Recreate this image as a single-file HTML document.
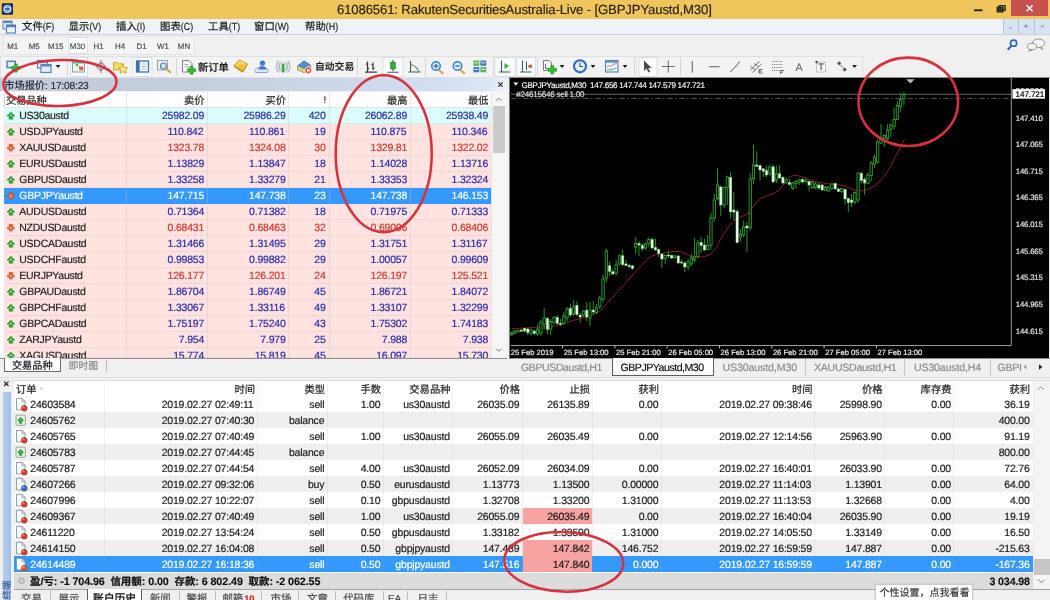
<!DOCTYPE html>
<html lang="zh-CN">
<head>
<meta charset="utf-8">
<title>61086561: RakutenSecuritiesAustralia-Live - [GBPJPYaustd,M30]</title>
<style>
html,body{margin:0;padding:0;background:#f0f0f0;overflow:hidden}
#app{position:relative;width:1050px;height:600px;overflow:hidden;font-family:"Liberation Sans", "Noto Sans CJK SC", sans-serif;background:#f0f0f0}
#app>div{position:absolute}
#ov{position:absolute;left:0;top:0;width:1050px;height:600px;font-family:"Liberation Sans", "Noto Sans CJK SC", sans-serif;pointer-events:none;will-change:transform;text-rendering:geometricPrecision}
#ov text{font-family:"Liberation Sans", "Noto Sans CJK SC", sans-serif;white-space:pre}
</style>
</head>
<body>
<div id="app">
<div style="left:0px;top:0px;width:1050px;height:18.6px;background:#f0c55c;"></div>
<div style="left:1011px;top:0px;width:37px;height:16px;background:#c9514d;"></div>
<div style="left:0px;top:18.6px;width:1050px;height:16.4px;background:#eff2f7;"></div>
<div style="left:0px;top:34px;width:1050px;height:1px;background:#cdd0d6;"></div>
<div style="left:1003px;top:18.6px;width:47px;height:15.4px;background:#d6e3f3;border-left:1px solid #b4c3d6;"></div>
<div style="left:1018px;top:18.6px;width:1px;height:15.4px;background:#b4c3d6;"></div>
<div style="left:1034px;top:18.6px;width:1px;height:15.4px;background:#b4c3d6;"></div>
<div style="left:0px;top:35px;width:1050px;height:21px;background:#f0f0f0;"></div>
<div style="left:3px;top:36px;width:192px;height:19px;background:#f4f4f5;border:1px solid #e4e5e8;box-sizing:border-box;"></div>
<div style="left:68px;top:37px;width:20px;height:17px;background:#fcfdff;border:1px solid #dbe2ec;box-sizing:border-box;"></div>
<div style="left:0px;top:56px;width:1050px;height:22px;background:#f0f0f0;"></div>
<div style="left:0px;top:56px;width:863px;height:22px;background:#f3f3f4;border:1px solid #e0e1e4;box-sizing:border-box;"></div>
<div style="left:67px;top:58px;width:1px;height:18px;background:#d3d6db;"></div>
<div style="left:176px;top:58px;width:1px;height:18px;background:#d3d6db;"></div>
<div style="left:357px;top:58px;width:1px;height:18px;background:#d3d6db;"></div>
<div style="left:425px;top:58px;width:1px;height:18px;background:#d3d6db;"></div>
<div style="left:493px;top:58px;width:1px;height:18px;background:#d3d6db;"></div>
<div style="left:537px;top:58px;width:1px;height:18px;background:#d3d6db;"></div>
<div style="left:634px;top:58px;width:1px;height:18px;background:#d3d6db;"></div>
<div style="left:680px;top:58px;width:1px;height:18px;background:#d3d6db;"></div>
<div style="left:636px;top:58px;width:1px;height:18px;background:#e6e8ec;"></div>
<div style="left:0px;top:78px;width:510px;height:300px;background:#f0f0f0;"></div>
<div style="left:0px;top:78px;width:508.5px;height:13.3px;background:linear-gradient(90deg,#c2cad9 0%,#c5cede 40%,#d3dff2 88%,#dbe6f6 96%,#f1f4f9 100%);"></div>
<div style="left:0px;top:92px;width:507px;height:266px;background:#ffffff;"></div>
<div style="left:3.5px;top:92px;width:1px;height:266px;background:#c9d3e3;"></div>
<div style="left:4px;top:107px;width:487px;height:1px;background:#e4e4e4;"></div>
<div style="left:4px;top:108px;width:487px;height:16px;background:#dbfcfb;border-bottom:1px solid #cdeeee;box-sizing:border-box;"></div>
<div style="left:4px;top:124px;width:487px;height:16px;background:#ffe3e1;border-bottom:1px solid #f7d6d4;box-sizing:border-box;"></div>
<div style="left:4px;top:140px;width:487px;height:16px;background:#ffe3e1;border-bottom:1px solid #f7d6d4;box-sizing:border-box;"></div>
<div style="left:4px;top:156px;width:487px;height:16px;background:#ffe3e1;border-bottom:1px solid #f7d6d4;box-sizing:border-box;"></div>
<div style="left:4px;top:172px;width:487px;height:16px;background:#ffe3e1;border-bottom:1px solid #f7d6d4;box-sizing:border-box;"></div>
<div style="left:4px;top:188px;width:487px;height:16px;background:#3399fe;border-bottom:1px solid #3399fe;box-sizing:border-box;"></div>
<div style="left:4px;top:204px;width:487px;height:16px;background:#ffe3e1;border-bottom:1px solid #f7d6d4;box-sizing:border-box;"></div>
<div style="left:4px;top:220px;width:487px;height:16px;background:#ffe3e1;border-bottom:1px solid #f7d6d4;box-sizing:border-box;"></div>
<div style="left:4px;top:236px;width:487px;height:16px;background:#ffe3e1;border-bottom:1px solid #f7d6d4;box-sizing:border-box;"></div>
<div style="left:4px;top:252px;width:487px;height:16px;background:#ffe3e1;border-bottom:1px solid #f7d6d4;box-sizing:border-box;"></div>
<div style="left:4px;top:268px;width:487px;height:16px;background:#ffe3e1;border-bottom:1px solid #f7d6d4;box-sizing:border-box;"></div>
<div style="left:4px;top:284px;width:487px;height:16px;background:#ffe3e1;border-bottom:1px solid #f7d6d4;box-sizing:border-box;"></div>
<div style="left:4px;top:300px;width:487px;height:16px;background:#ffe3e1;border-bottom:1px solid #f7d6d4;box-sizing:border-box;"></div>
<div style="left:4px;top:316px;width:487px;height:16px;background:#ffe3e1;border-bottom:1px solid #f7d6d4;box-sizing:border-box;"></div>
<div style="left:4px;top:332px;width:487px;height:16px;background:#ffe3e1;border-bottom:1px solid #f7d6d4;box-sizing:border-box;"></div>
<div style="left:4px;top:348px;width:487px;height:10px;background:#ffe3e1;border-bottom:1px solid #f7d6d4;box-sizing:border-box;"></div>
<div style="left:125.5px;top:92px;width:1px;height:266px;background:rgba(205,190,195,0.35);"></div>
<div style="left:206.5px;top:92px;width:1px;height:266px;background:rgba(205,190,195,0.35);"></div>
<div style="left:287.5px;top:92px;width:1px;height:266px;background:rgba(205,190,195,0.35);"></div>
<div style="left:328.5px;top:92px;width:1px;height:266px;background:rgba(205,190,195,0.35);"></div>
<div style="left:410px;top:92px;width:1px;height:266px;background:rgba(205,190,195,0.35);"></div>
<div style="left:491px;top:91.5px;width:17px;height:266.5px;background:#f6f6f6;border-left:1px solid #e6e6e6;box-sizing:border-box;"></div>
<div style="left:492.5px;top:105.5px;width:12.5px;height:47.5px;background:#cbcbcb;"></div>
<div style="left:0px;top:358px;width:510px;height:18px;background:#f0f0f0;"></div>
<div style="left:0px;top:358px;width:507px;height:1px;background:#8e8e8e;"></div>
<div style="left:3.7px;top:358px;width:57px;height:13.7px;background:#ffffff;border:1px solid #6d6d6d;border-top:none;box-sizing:border-box;"></div>
<div style="left:106px;top:359.5px;width:1px;height:11.5px;background:#b9b9b9;"></div>
<div style="left:507px;top:78px;width:3px;height:300px;background:#f0f0f0;"></div>
<div style="left:509px;top:77px;width:541px;height:1px;background:#8a8a8a;"></div>
<div style="left:509px;top:78px;width:541px;height:280px;background:#000000;"></div>
<div style="left:509.3px;top:78px;width:1px;height:280px;background:#7d7d7d;"></div>
<div style="left:1049px;top:78px;width:1px;height:280px;background:#e9e9e9;"></div>
<div style="left:509px;top:358px;width:541px;height:18px;background:#f0f0f0;"></div>
<div style="left:509px;top:358px;width:541px;height:1px;background:#8e8e8e;"></div>
<div style="left:612px;top:358px;width:101.5px;height:17.6px;background:#ffffff;border:1px solid #5c5c5c;border-top:none;box-sizing:border-box;"></div>
<div style="left:1019px;top:359px;width:31px;height:16px;background:#f0f0f0;"></div>
<div style="left:805px;top:359px;width:1px;height:16.5px;background:#c6c6c6;"></div>
<div style="left:904px;top:359px;width:1px;height:16.5px;background:#c6c6c6;"></div>
<div style="left:990px;top:359px;width:1px;height:16.5px;background:#c6c6c6;"></div>
<div style="left:0px;top:376px;width:1050px;height:4px;background:#f2f2f2;"></div>
<div style="left:0px;top:377px;width:1050px;height:1px;background:#dedede;"></div>
<div style="left:0px;top:380px;width:1050px;height:220px;background:#f0f0f0;"></div>
<div style="left:13.5px;top:380px;width:1036.5px;height:192.5px;background:#ffffff;"></div>
<div style="left:0px;top:379.5px;width:1050px;height:1px;background:#dcdcdc;"></div>
<div style="left:2.6px;top:392px;width:8.6px;height:208px;background:linear-gradient(90deg,#b7cdec,#a3bee4);"></div>
<div style="left:13.5px;top:396px;width:1019px;height:1px;background:#e6e6e6;"></div>
<div style="left:13.5px;top:396.2px;width:1019px;height:16px;background:#ffffff;"></div>
<div style="left:13.5px;top:412.2px;width:1019px;height:16px;background:#efefef;"></div>
<div style="left:13.5px;top:428.2px;width:1019px;height:16px;background:#ffffff;"></div>
<div style="left:13.5px;top:444.2px;width:1019px;height:16px;background:#efefef;"></div>
<div style="left:13.5px;top:460.2px;width:1019px;height:16px;background:#ffffff;"></div>
<div style="left:13.5px;top:476.2px;width:1019px;height:16px;background:#efefef;"></div>
<div style="left:13.5px;top:492.2px;width:1019px;height:16px;background:#ffffff;"></div>
<div style="left:13.5px;top:508.2px;width:1019px;height:16px;background:#efefef;"></div>
<div style="left:523px;top:508.2px;width:69px;height:16px;background:#f6a3a2;"></div>
<div style="left:13.5px;top:524.2px;width:1019px;height:16px;background:#ffffff;"></div>
<div style="left:13.5px;top:540.2px;width:1019px;height:16px;background:#efefef;"></div>
<div style="left:523px;top:540.2px;width:69px;height:16px;background:#f6a3a2;"></div>
<div style="left:13.5px;top:556.2px;width:1019px;height:16px;background:#3399fe;"></div>
<div style="left:523px;top:556.2px;width:69px;height:16px;background:#f6a3a2;"></div>
<div style="left:103.5px;top:380.5px;width:1px;height:192px;background:rgba(170,170,170,0.15);"></div>
<div style="left:256.7px;top:380.5px;width:1px;height:192px;background:rgba(170,170,170,0.15);"></div>
<div style="left:326.7px;top:380.5px;width:1px;height:192px;background:rgba(170,170,170,0.15);"></div>
<div style="left:382.7px;top:380.5px;width:1px;height:192px;background:rgba(170,170,170,0.15);"></div>
<div style="left:452.2px;top:380.5px;width:1px;height:192px;background:rgba(170,170,170,0.15);"></div>
<div style="left:521.7px;top:380.5px;width:1px;height:192px;background:rgba(170,170,170,0.15);"></div>
<div style="left:591.7px;top:380.5px;width:1px;height:192px;background:rgba(170,170,170,0.15);"></div>
<div style="left:660.7px;top:380.5px;width:1px;height:192px;background:rgba(170,170,170,0.15);"></div>
<div style="left:814.2px;top:380.5px;width:1px;height:192px;background:rgba(170,170,170,0.15);"></div>
<div style="left:884.2px;top:380.5px;width:1px;height:192px;background:rgba(170,170,170,0.15);"></div>
<div style="left:953.4px;top:380.5px;width:1px;height:192px;background:rgba(170,170,170,0.15);"></div>
<div style="left:13.5px;top:572.5px;width:1019px;height:16.5px;background:#dcdcdc;"></div>
<div style="left:1032.5px;top:380.5px;width:17.5px;height:208.5px;background:#f4f4f4;border-left:1px solid #ebebeb;box-sizing:border-box;"></div>
<div style="left:1034px;top:558.5px;width:16px;height:16px;background:#c6c6c6;"></div>
<div style="left:13.5px;top:588.8px;width:1036.5px;height:1px;background:#a3a3a3;"></div>
<div style="left:86.5px;top:589px;width:55.5px;height:12px;background:#ffffff;border:1px solid #5c5c5c;border-top:none;box-sizing:border-box;"></div>
<div style="left:50px;top:591px;width:1px;height:9px;background:#bdbdbd;"></div>
<div style="left:178.6px;top:591px;width:1px;height:9px;background:#bdbdbd;"></div>
<div style="left:214.8px;top:591px;width:1px;height:9px;background:#bdbdbd;"></div>
<div style="left:261.2px;top:591px;width:1px;height:9px;background:#bdbdbd;"></div>
<div style="left:298.4px;top:591px;width:1px;height:9px;background:#bdbdbd;"></div>
<div style="left:334.7px;top:591px;width:1px;height:9px;background:#bdbdbd;"></div>
<div style="left:382.6px;top:591px;width:1px;height:9px;background:#bdbdbd;"></div>
<div style="left:406.9px;top:591px;width:1px;height:9px;background:#bdbdbd;"></div>
<div style="left:445.7px;top:591px;width:1px;height:9px;background:#bdbdbd;"></div>
<div style="left:874.5px;top:583.5px;width:98px;height:17px;background:#ffffff;border:1px solid #c9c9c9;box-sizing:border-box;box-shadow:0 0 2px rgba(0,0,0,0.15);"></div>
<svg id="ov" width="1050" height="600" viewBox="0 0 1050 600">
<g><rect x="1.8" y="3.2" width="11.2" height="11.6" rx="0.8" fill="#152c66"/><circle cx="7.4" cy="9" r="4.1" fill="#dfe8fb"/><circle cx="7.4" cy="9" r="2.9" fill="#2f62cf"/><path d="M4.6 8.3c1.500-1.500 4-1.500 5.600 0M4.600 9.900c1.500 1.400 4 1.400 5.600 0" stroke="#e8effd" stroke-width="1" fill="none"/></g>
<text x="337.00" y="13.84" font-size="13.2" letter-spacing="-0.163" fill="#2a2416" stroke="#2a2416" stroke-width="0.18">61086561: RakutenSecuritiesAustralia-Live - [GBPJPYaustd,M30]</text>
<rect x="974" y="9.4" width="8.5" height="1.8" fill="#1c1a12"/>
<g fill="none" stroke="#2a261a" stroke-width="1.4"><rect x="997.3" y="7.2" width="5.6" height="4.6" fill="#3a3424"/><path d="M999.3 7.2V5.6h5.8v4.6h-2.2"/></g>
<path d="M1026.6 5.2l6 6M1032.6 5.2l-6 6" stroke="#fff" stroke-width="1.6" fill="none"/>
<g fill="#7f93ad"><path d="M1009.2 27.3h2.6l-1.3 1.6z"/><rect x="1024.6" y="24.8" width="2.6" height="2.6"/><path d="M1041 25.2l2.4 2.4M1043.4 25.2l-2.4 2.4" stroke="#7f93ad" stroke-width="1" /></g>
<g><rect x="3" y="21" width="9" height="8" fill="#dfe9f8" stroke="#5b86c4" stroke-width="1"/><rect x="6.5" y="25" width="9" height="8" fill="#eaf1fb" stroke="#4d7cbd" stroke-width="1"/><rect x="6.5" y="25" width="9" height="2.2" fill="#4d7cbd"/><rect x="3" y="21" width="9" height="2" fill="#5b86c4"/></g>
<g fill="#1a1a1a"><text x="22.00" y="30.25" font-size="10.4" stroke="#1a1a1a" stroke-width="0.2">文件</text><text x="42.80" y="29.84" font-size="10.30" textLength="11.31" lengthAdjust="spacingAndGlyphs" stroke="#1a1a1a" stroke-width="0.15">(F)</text></g>
<g fill="#1a1a1a"><text x="68.60" y="30.25" font-size="10.4" stroke="#1a1a1a" stroke-width="0.2">显示</text><text x="89.40" y="29.84" font-size="10.30" textLength="11.81" lengthAdjust="spacingAndGlyphs" stroke="#1a1a1a" stroke-width="0.15">(V)</text></g>
<g fill="#1a1a1a"><text x="116.00" y="30.25" font-size="10.4" stroke="#1a1a1a" stroke-width="0.2">插入</text><text x="136.80" y="29.84" font-size="10.30" textLength="8.36" lengthAdjust="spacingAndGlyphs" stroke="#1a1a1a" stroke-width="0.15">(I)</text></g>
<g fill="#1a1a1a"><text x="160.00" y="30.25" font-size="10.4" stroke="#1a1a1a" stroke-width="0.2">图表</text><text x="180.80" y="29.84" font-size="10.30" textLength="12.30" lengthAdjust="spacingAndGlyphs" stroke="#1a1a1a" stroke-width="0.15">(C)</text></g>
<g fill="#1a1a1a"><text x="208.00" y="30.25" font-size="10.4" stroke="#1a1a1a" stroke-width="0.2">工具</text><text x="228.80" y="29.84" font-size="10.30" textLength="11.31" lengthAdjust="spacingAndGlyphs" stroke="#1a1a1a" stroke-width="0.15">(T)</text></g>
<g fill="#1a1a1a"><text x="254.00" y="30.25" font-size="10.4" stroke="#1a1a1a" stroke-width="0.2">窗口</text><text x="274.80" y="29.84" font-size="10.30" textLength="14.26" lengthAdjust="spacingAndGlyphs" stroke="#1a1a1a" stroke-width="0.15">(W)</text></g>
<g fill="#1a1a1a"><text x="305.00" y="30.25" font-size="10.4" stroke="#1a1a1a" stroke-width="0.2">帮助</text><text x="325.80" y="29.84" font-size="10.30" textLength="12.30" lengthAdjust="spacingAndGlyphs" stroke="#1a1a1a" stroke-width="0.15">(H)</text></g>
<text x="7.21" y="48.52" font-size="7.9" letter-spacing="0.000" fill="#4c4c4c" stroke="#4c4c4c" stroke-width="0.18">M1</text>
<text x="28.81" y="48.52" font-size="7.9" letter-spacing="0.000" fill="#4c4c4c" stroke="#4c4c4c" stroke-width="0.18">M5</text>
<text x="48.12" y="48.52" font-size="7.9" letter-spacing="0.000" fill="#4c4c4c" stroke="#4c4c4c" stroke-width="0.18">M15</text>
<text x="69.82" y="48.52" font-size="7.9" letter-spacing="0.000" fill="#4c4c4c" stroke="#4c4c4c" stroke-width="0.18">M30</text>
<text x="93.45" y="48.52" font-size="7.9" letter-spacing="0.000" fill="#4c4c4c" stroke="#4c4c4c" stroke-width="0.18">H1</text>
<text x="114.95" y="48.52" font-size="7.9" letter-spacing="0.000" fill="#4c4c4c" stroke="#4c4c4c" stroke-width="0.18">H4</text>
<text x="136.45" y="48.52" font-size="7.9" letter-spacing="0.000" fill="#4c4c4c" stroke="#4c4c4c" stroke-width="0.18">D1</text>
<text x="157.07" y="48.52" font-size="7.9" letter-spacing="0.000" fill="#4c4c4c" stroke="#4c4c4c" stroke-width="0.18">W1</text>
<text x="177.86" y="48.52" font-size="7.9" letter-spacing="0.000" fill="#4c4c4c" stroke="#4c4c4c" stroke-width="0.18">MN</text>
<g fill="none"><circle cx="1013.6" cy="43.2" r="3.1" stroke="#2d63c7" stroke-width="1.6" fill="#e8f0ff"/><path d="M1011.3 45.8l-3.6 4" stroke="#2d63c7" stroke-width="2"/></g>
<g fill="#f4f4f4" stroke="#8c8c8c" stroke-width="0.9"><ellipse cx="1038.5" cy="43.3" rx="6.2" ry="4.3"/><path d="M1041.5 47l1.2 2.6-3.4-2.2z"/><ellipse cx="1032" cy="46.6" rx="4.6" ry="3.3"/><path d="M1030 49.4l-1 2.2 3-1.9z"/></g>
<rect x="70.5" y="57.5" width="17" height="19" fill="#fafbfd" stroke="#d9dfe9" stroke-width="1"/>
<rect x="133" y="57.5" width="19" height="19" fill="#fafbfd" stroke="#d9dfe9" stroke-width="1"/>
<rect x="383" y="57.5" width="20" height="19" fill="#fafbfd" stroke="#d9dfe9" stroke-width="1"/>
<rect x="495" y="57.5" width="20" height="19" fill="#fafbfd" stroke="#d9dfe9" stroke-width="1"/>
<rect x="516.5" y="57.5" width="19" height="19" fill="#fafbfd" stroke="#d9dfe9" stroke-width="1"/>
<rect x="639" y="57.5" width="18" height="19" fill="#fafbfd" stroke="#d9dfe9" stroke-width="1"/>
<rect x="7" y="61.300" width="8.300" height="6.300" fill="#e6eefa" stroke="#4f7dbd" stroke-width="1.400"/>
<path d="M11.700000000000001 66.5h2.5999999999999996v-2.5999999999999996h3.0v2.5999999999999996h2.5999999999999996v3.0h-2.5999999999999996v2.5999999999999996h-3.0v-2.5999999999999996h-2.5999999999999996z" fill="#26c726" stroke="#1c8f1c" stroke-width="0.6"/>
<g fill="#e4edfa" stroke="#5a82bd" stroke-width="1.2"><rect x="37.5" y="60.5" width="10" height="7.5"/><rect x="41" y="64.5" width="10" height="8"/></g><rect x="37.5" y="60.5" width="10" height="2" fill="#5a82bd"/><rect x="41" y="64.5" width="10" height="2" fill="#5a82bd"/>
<path d="M55.6 65.1h4.8l-2.4 2.8z" fill="#1a1a1a"/>
<rect x="72.5" y="61.5" width="12" height="10.5" fill="#eef4ee" stroke="#7fa6a0" stroke-width="1"/><rect x="72.5" y="61.5" width="12" height="2" fill="#6fae9a"/><path d="M75 65l3 -1.5v3z" fill="#3aa83a"/><path d="M79 66.5l3.5 3M82.5 66.5v3h-3" stroke="#d8443c" stroke-width="1.3" fill="none"/><circle cx="80.8" cy="68.2" r="1.6" fill="#e0605a"/>
<g fill="none" stroke="#8a8f96" stroke-width="1.2"><path d="M101 60v13M96.5 66.5l4.5-4.5 4.5 4.5-4.5 4.5z"/></g>
<g stroke="#c9a227" stroke-width="0.9"><path d="M113.5 62.5h4l1 1.3h5v6.2h-10z" fill="#f6dc6a"/><path d="M123 64.5l1.5 2.9 3.2.4-2.3 2.2.6 3.2-3-1.6-2.9 1.6.6-3.2-2.3-2.2 3.2-.4z" fill="#fbe88a"/></g>
<rect x="136.5" y="61" width="12" height="11" fill="#f4f8fd" stroke="#3f6fb3" stroke-width="1.3"/><rect x="136.5" y="61" width="3.2" height="11" fill="#3f6fb3"/><path d="M141.5 64h5M141.5 66.5h5M141.5 69h5" stroke="#9db6d6" stroke-width="0.8"/>
<rect x="157.5" y="60.5" width="10" height="9.5" fill="#eef0f3" stroke="#9aa1ab" stroke-width="1"/><circle cx="163.5" cy="66" r="3" fill="#cfe0f5" stroke="#5d7fae" stroke-width="1.1"/><path d="M165.8 68.4l5 4.4" stroke="#c8a53a" stroke-width="1.8"/>
<path d="M182.5 60.5h6.5l3 3v8.500h-9.500z" fill="#fafafa" stroke="#7d7d7d" stroke-width="1"/><path d="M184.500 64.500h4M184.500 66.800h5.500" stroke="#9a9a9a" stroke-width="0.8"/>
<path d="M187.6 68.8h2.6v-2.6h2.8v2.6h2.6v2.8h-2.6v2.6h-2.8v-2.6h-2.6z" fill="#2fbe2f" stroke="#1c8f1c" stroke-width="0.6"/>
<path d="M233.800 66.800l5.800-6.300 8 4.600-4.800 7.600z" fill="#b8860f"/><path d="M233.800 65.600l5.800-5.800 8 4.300-4.800 7z" fill="#f0c23c" stroke="#c9971c" stroke-width="0.7"/><path d="M236.800 65.300l3.600-3.400 4.600 2.500" stroke="#fbe9a6" stroke-width="1.1" fill="none"/>
<path d="M255.5 72.5c-1.5-3 1-5 3-4.5.5-2.5 5.5-2.5 6 0 3-.5 4.500 2.500 3 4.500z" fill="#dce8f8" stroke="#7a9ccc" stroke-width="0.9"/><circle cx="262.5" cy="63" r="2.6" fill="#3d78c9"/><path d="M258.500 69.500c0-4.500 8-4.500 8 0z" fill="#3d78c9"/>
<circle cx="283.100" cy="66.700" r="6.300" fill="#dfe2e6" opacity="0.75"/><g fill="none" stroke="#a3a9b1" stroke-width="1.1"><path d="M280.500 63c-2 2.200-2 5.300 0 7.500M285.700 63c2 2.200 2 5.300 0 7.500M278.600 61c-3.300 3.500-3.300 8 0 11.500M287.600 61c3.300 3.500 3.300 8 0 11.500"/></g><rect x="281.700" y="63.500" width="2.800" height="9" rx="1.200" fill="#3fae4a"/>
<path d="M297.500 66l6.500-5 6.500 4v4l-6.500 3.500-6.500-3z" fill="#4f8fd6" stroke="#2f65a8" stroke-width="0.8"/><path d="M297.500 66l6.500 3 6.500-4v4l-6.500 3.500-6.500-3z" fill="#f0cf52"/><circle cx="308.300" cy="70.300" r="3.200" fill="#e23b2e" stroke="#fff" stroke-width="0.6"/><rect x="307" y="69" width="2.600" height="2.600" fill="#fff"/>
<g stroke="#34433c" stroke-width="1.250" fill="none"><path d="M365 72h12M367.500 61.500v10.500M366 64h1.500M367.500 68.500h1.500M373 62.500v7.500M371.500 64.500h1.500M373 68h1.500"/></g>
<g stroke="#3d5c4f" stroke-width="1.100" fill="none"><path d="M387.500 72.300h11M393 59.800v11.500"/></g><rect x="390.800" y="62.300" width="4.400" height="6.500" fill="#35b535" stroke="#1f7a1f" stroke-width="0.8"/>
<g stroke="#3d5c4f" stroke-width="1.100" fill="none"><path d="M408.500 72h12M410.500 61v11"/><path d="M410.500 64.500c3 0 5 2 8.500 6.500" stroke="#6a7f74"/></g>
<path d="M438.6 69.6l4.600 4.200" stroke="#d3b04a" stroke-width="2.200"/><circle cx="436" cy="66" r="4.300" fill="#d9ebfb" stroke="#3a7ec7" stroke-width="1.500"/><path d="M433.7 66h4.600" stroke="#2d6bb3" stroke-width="1.300"/><path d="M436 63.700v4.600" stroke="#2d6bb3" stroke-width="1.300"/>
<path d="M460.1 69.6l4.600 4.200" stroke="#d3b04a" stroke-width="2.200"/><circle cx="457.5" cy="66" r="4.300" fill="#d9ebfb" stroke="#3a7ec7" stroke-width="1.500"/><path d="M455.2 66h4.600" stroke="#2d6bb3" stroke-width="1.300"/>
<rect x="473.500" y="60.500" width="5.800" height="5.300" fill="#57b84f"/><rect x="480.400" y="60.500" width="5.800" height="5.300" fill="#3f78c4"/><rect x="473.500" y="67" width="5.800" height="5.300" fill="#3f78c4"/><rect x="480.400" y="67" width="5.800" height="5.300" fill="#57b84f"/><path d="M474.500 62.800h3.800M481.400 62.800h3.800M474.500 69.300h3.800M481.400 69.300h3.800" stroke="#e9f3ff" stroke-width="1"/>
<g stroke="#3d5c4f" stroke-width="1.100" fill="none"><path d="M499 72h11.500M501.500 60.500v11.500"/></g><path d="M504.500 63l4.500 3-4.500 3z" fill="#3cb043"/>
<g stroke="#3d5c4f" stroke-width="1.100" fill="none"><path d="M520 72h11.500M522.500 60.500v11.500M526.500 61.500v8.500"/></g><path d="M531.500 64l-3.500 2.300 3.500 2.300z" fill="#d6402f"/><path d="M528 66.300h4" stroke="#d6402f" stroke-width="1"/>
<path d="M543.5 60.5h5.500l2.500 2.500v7.500h-8z" fill="#fafafa" stroke="#7d7d7d" stroke-width="1"/><path d="M545.5 64v4.500h3" stroke="#3d5c4f" stroke-width="0.9" fill="none"/>
<path d="M548.0999999999999 68.3h2.7v-2.7h3.0v2.7h2.7v3.0h-2.7v2.7h-3.0v-2.7h-2.7z" fill="#2fbe2f" stroke="#1c8f1c" stroke-width="0.6"/>
<path d="M559.6 65.1h4.8l-2.4 2.8z" fill="#1a1a1a"/>
<circle cx="580" cy="66.300" r="6" fill="#e9f2fc" stroke="#2f6fc4" stroke-width="2.200"/><path d="M580 62.800v3.700h3" stroke="#2c4f80" stroke-width="1.100" fill="none"/>
<path d="M590.6 65.1h4.8l-2.4 2.8z" fill="#1a1a1a"/>
<rect x="605.500" y="60.500" width="12.500" height="11.500" fill="#eef4fb" stroke="#5f7ea6" stroke-width="1.100"/><rect x="605.500" y="60.500" width="12.500" height="2.200" fill="#5f8fc9"/><path d="M607 67c2-3 3.500 1 5-1.500s3-1 4.500-2" stroke="#cf5a3c" stroke-width="0.9" fill="none"/><path d="M607 70c2-1 3.500 .5 5-.5s3-.5 4.500-1.500" stroke="#3d9a55" stroke-width="0.9" fill="none"/>
<path d="M622.6 65.1h4.8l-2.4 2.8z" fill="#1a1a1a"/>
<path d="M644 60.500v10.500l2.600-2.400 1.800 3.900 1.700-.8-1.800-3.800h3.400z" fill="#4a4a4a"/>
<path d="M668.300 60.500v12M662 66.500h12.600" stroke="#6a6a6a" stroke-width="1" fill="none"/>
<path d="M692.300 61v11.500" stroke="#6a6a6a" stroke-width="1.100"/><path d="M709 66.700h10.500" stroke="#6a6a6a" stroke-width="1.100"/><path d="M730.500 72l9.500-10.500" stroke="#777" stroke-width="1.100"/>
<g stroke="#6d6d6d" stroke-width="0.9" fill="none"><path d="M750.500 70l9-8.500M752.500 72.500l9-8.500M750.500 66.500l5 3.500M754 63.500l5 3.500"/></g><path d="M759 69.500h3.500M759 71.300h2.500M759 73h3.500M759 69.500v3.500" stroke="#444" stroke-width="0.8" fill="none"/>
<g stroke="#777" stroke-width="0.9" stroke-dasharray="1.200 0.900"><path d="M772 61.500h11M772 64.500h11M772 67.500h11M772 70.500h8"/></g><path d="M780.500 70.500h3.500M780.500 72.200h2.500M780.500 70.500v3.500" stroke="#444" stroke-width="0.8" fill="none"/>
<text x="795.60" y="70.52" font-size="10.8" letter-spacing="0.000" fill="#6a6a6a" stroke="#6a6a6a" stroke-width="0.18">A</text>
<rect x="816.500" y="62" width="9" height="10" fill="#f6f6f6" stroke="#8a8a8a" stroke-width="0.8" stroke-dasharray="1 0.800"/><rect x="815.500" y="60.800" width="2.200" height="2.200" fill="#555"/>
<text x="818.26" y="70.40" font-size="9.3" letter-spacing="0.000" fill="#555" stroke="#555" stroke-width="0.18">T</text>
<g fill="#555"><path d="M837 63.300l2.100-2.100 2.100 2.100-2.100 2.100z"/><path d="M842.600 69.600l2.100-2.100 2.100 2.100-2.100 2.100z"/><path d="M840 64.600l3.700 3.700" stroke="#666" stroke-width="0.9"/></g>
<path d="M852.1 65.1h4.8l-2.4 2.8z" fill="#1a1a1a"/>
<g fill="#1a1a1a"><text x="198.00" y="70.51" font-size="10.3" font-weight="500" stroke="#1a1a1a" stroke-width="0.2">新订单</text></g>
<g fill="#1a1a1a"><text x="315.00" y="70.32" font-size="9.8" font-weight="500" stroke="#1a1a1a" stroke-width="0.2">自动交易</text></g>
<g fill="#1c2430"><text x="4.30" y="88.88" font-size="10.2" stroke="#1c2430" stroke-width="0.2">市场报价</text><text x="45.10" y="88.51" font-size="10.20" letter-spacing="-0.18" stroke="#1c2430" stroke-width="0.15">: 17:08:23</text></g>
<path d="M498.400 82.400l4.200 4.200M502.600 82.400l-4.200 4.200" stroke="#222" stroke-width="1.150" fill="none"/>
<g fill="#222"><text x="6.00" y="103.88" font-size="10.2" stroke="#222" stroke-width="0.2">交易品种</text></g>
<g fill="#222"><text x="184.10" y="103.88" font-size="10.2" stroke="#222" stroke-width="0.2">卖价</text></g>
<g fill="#222"><text x="265.60" y="103.88" font-size="10.2" stroke="#222" stroke-width="0.2">买价</text></g>
<g fill="#222"><text x="323.45" y="103.40" font-size="9.89" letter-spacing="-0.2" stroke="#222" stroke-width="0.15">!</text></g>
<g fill="#222"><text x="387.10" y="103.88" font-size="10.2" stroke="#222" stroke-width="0.2">最高</text></g>
<g fill="#222"><text x="468.10" y="103.88" font-size="10.2" stroke="#222" stroke-width="0.2">最低</text></g>
<clipPath id="mwclip"><rect x="0" y="107" width="492" height="251"/></clipPath><g clip-path="url(#mwclip)"><path d="M10.9 112.25l3.900 3.700h-2.100v3.200h-3.600v-3.200h-2.100z" fill="#33ad3e" stroke="#1d8f2b" stroke-width="0.650"/><path d="M10.900 114.44999999999999l1.300 1.500h-2.600z" fill="#d8f5da"/><text x="19.30" y="119.46" font-size="10.5" letter-spacing="-0.270" fill="#1c1c1c" stroke="#1c1c1c" stroke-width="0.18">US30austd</text><text x="161.91" y="119.46" font-size="10.5" letter-spacing="-0.200" fill="#282cac" stroke="#282cac" stroke-width="0.18">25982.09</text><text x="243.41" y="119.46" font-size="10.5" letter-spacing="-0.200" fill="#282cac" stroke="#282cac" stroke-width="0.18">25986.29</text><text x="308.68" y="119.46" font-size="10.5" letter-spacing="-0.200" fill="#282cac" stroke="#282cac" stroke-width="0.18">420</text><text x="364.91" y="119.46" font-size="10.5" letter-spacing="-0.200" fill="#282cac" stroke="#282cac" stroke-width="0.18">26062.89</text><text x="445.91" y="119.46" font-size="10.5" letter-spacing="-0.200" fill="#282cac" stroke="#282cac" stroke-width="0.18">25938.49</text><path d="M10.9 128.25l3.900 3.700h-2.100v3.200h-3.600v-3.200h-2.100z" fill="#33ad3e" stroke="#1d8f2b" stroke-width="0.650"/><path d="M10.900 130.45l1.300 1.500h-2.600z" fill="#d8f5da"/><text x="19.30" y="135.46" font-size="10.5" letter-spacing="-0.270" fill="#1c1c1c" stroke="#1c1c1c" stroke-width="0.18">USDJPYaustd</text><text x="167.55" y="135.46" font-size="10.5" letter-spacing="-0.200" fill="#282cac" stroke="#282cac" stroke-width="0.18">110.842</text><text x="249.05" y="135.46" font-size="10.5" letter-spacing="-0.200" fill="#282cac" stroke="#282cac" stroke-width="0.18">110.861</text><text x="314.32" y="135.46" font-size="10.5" letter-spacing="-0.200" fill="#282cac" stroke="#282cac" stroke-width="0.18">19</text><text x="370.55" y="135.46" font-size="10.5" letter-spacing="-0.200" fill="#282cac" stroke="#282cac" stroke-width="0.18">110.875</text><text x="451.55" y="135.46" font-size="10.5" letter-spacing="-0.200" fill="#282cac" stroke="#282cac" stroke-width="0.18">110.346</text><path d="M10.9 151.45l3.900-3.700h-2.100v-3.200h-3.600v3.200h-2.100z" fill="#e8622e" stroke="#c9451c" stroke-width="0.650"/><path d="M10.900 149.35l1.300-1.500h-2.600z" fill="#ffd9c8"/><text x="19.30" y="151.46" font-size="10.5" letter-spacing="-0.270" fill="#1c1c1c" stroke="#1c1c1c" stroke-width="0.18">XAUUSDaustd</text><text x="167.55" y="151.46" font-size="10.5" letter-spacing="-0.200" fill="#d4372e" stroke="#d4372e" stroke-width="0.18">1323.78</text><text x="249.05" y="151.46" font-size="10.5" letter-spacing="-0.200" fill="#d4372e" stroke="#d4372e" stroke-width="0.18">1324.08</text><text x="314.32" y="151.46" font-size="10.5" letter-spacing="-0.200" fill="#d4372e" stroke="#d4372e" stroke-width="0.18">30</text><text x="370.55" y="151.46" font-size="10.5" letter-spacing="-0.200" fill="#d4372e" stroke="#d4372e" stroke-width="0.18">1329.81</text><text x="451.55" y="151.46" font-size="10.5" letter-spacing="-0.200" fill="#d4372e" stroke="#d4372e" stroke-width="0.18">1322.02</text><path d="M10.9 160.25l3.900 3.700h-2.100v3.200h-3.600v-3.200h-2.100z" fill="#33ad3e" stroke="#1d8f2b" stroke-width="0.650"/><path d="M10.900 162.45l1.300 1.500h-2.600z" fill="#d8f5da"/><text x="19.30" y="167.46" font-size="10.5" letter-spacing="-0.270" fill="#1c1c1c" stroke="#1c1c1c" stroke-width="0.18">EURUSDaustd</text><text x="167.55" y="167.46" font-size="10.5" letter-spacing="-0.200" fill="#282cac" stroke="#282cac" stroke-width="0.18">1.13829</text><text x="249.05" y="167.46" font-size="10.5" letter-spacing="-0.200" fill="#282cac" stroke="#282cac" stroke-width="0.18">1.13847</text><text x="314.32" y="167.46" font-size="10.5" letter-spacing="-0.200" fill="#282cac" stroke="#282cac" stroke-width="0.18">18</text><text x="370.55" y="167.46" font-size="10.5" letter-spacing="-0.200" fill="#282cac" stroke="#282cac" stroke-width="0.18">1.14028</text><text x="451.55" y="167.46" font-size="10.5" letter-spacing="-0.200" fill="#282cac" stroke="#282cac" stroke-width="0.18">1.13716</text><path d="M10.9 176.25l3.900 3.700h-2.100v3.200h-3.600v-3.200h-2.100z" fill="#33ad3e" stroke="#1d8f2b" stroke-width="0.650"/><path d="M10.900 178.45l1.300 1.500h-2.600z" fill="#d8f5da"/><text x="19.30" y="183.46" font-size="10.5" letter-spacing="-0.270" fill="#1c1c1c" stroke="#1c1c1c" stroke-width="0.18">GBPUSDaustd</text><text x="167.55" y="183.46" font-size="10.5" letter-spacing="-0.200" fill="#282cac" stroke="#282cac" stroke-width="0.18">1.33258</text><text x="249.05" y="183.46" font-size="10.5" letter-spacing="-0.200" fill="#282cac" stroke="#282cac" stroke-width="0.18">1.33279</text><text x="314.32" y="183.46" font-size="10.5" letter-spacing="-0.200" fill="#282cac" stroke="#282cac" stroke-width="0.18">21</text><text x="370.55" y="183.46" font-size="10.5" letter-spacing="-0.200" fill="#282cac" stroke="#282cac" stroke-width="0.18">1.33353</text><text x="451.55" y="183.46" font-size="10.5" letter-spacing="-0.200" fill="#282cac" stroke="#282cac" stroke-width="0.18">1.32324</text><path d="M10.9 199.45l3.900-3.700h-2.100v-3.200h-3.600v3.200h-2.100z" fill="#e8622e" stroke="#c9451c" stroke-width="0.650"/><path d="M10.900 197.35l1.300-1.500h-2.600z" fill="#ffd9c8"/><text x="19.30" y="199.46" font-size="10.5" letter-spacing="-0.270" fill="#ffffff" stroke="#ffffff" stroke-width="0.18">GBPJPYaustd</text><text x="167.55" y="199.46" font-size="10.5" letter-spacing="-0.200" fill="#ffffff" stroke="#ffffff" stroke-width="0.18">147.715</text><text x="249.05" y="199.46" font-size="10.5" letter-spacing="-0.200" fill="#ffffff" stroke="#ffffff" stroke-width="0.18">147.738</text><text x="314.32" y="199.46" font-size="10.5" letter-spacing="-0.200" fill="#ffffff" stroke="#ffffff" stroke-width="0.18">23</text><text x="370.55" y="199.46" font-size="10.5" letter-spacing="-0.200" fill="#ffffff" stroke="#ffffff" stroke-width="0.18">147.738</text><text x="451.55" y="199.46" font-size="10.5" letter-spacing="-0.200" fill="#ffffff" stroke="#ffffff" stroke-width="0.18">146.153</text><path d="M10.9 208.25l3.900 3.700h-2.100v3.200h-3.600v-3.200h-2.100z" fill="#33ad3e" stroke="#1d8f2b" stroke-width="0.650"/><path d="M10.900 210.45l1.300 1.500h-2.600z" fill="#d8f5da"/><text x="19.30" y="215.46" font-size="10.5" letter-spacing="-0.270" fill="#1c1c1c" stroke="#1c1c1c" stroke-width="0.18">AUDUSDaustd</text><text x="167.55" y="215.46" font-size="10.5" letter-spacing="-0.200" fill="#282cac" stroke="#282cac" stroke-width="0.18">0.71364</text><text x="249.05" y="215.46" font-size="10.5" letter-spacing="-0.200" fill="#282cac" stroke="#282cac" stroke-width="0.18">0.71382</text><text x="314.32" y="215.46" font-size="10.5" letter-spacing="-0.200" fill="#282cac" stroke="#282cac" stroke-width="0.18">18</text><text x="370.55" y="215.46" font-size="10.5" letter-spacing="-0.200" fill="#282cac" stroke="#282cac" stroke-width="0.18">0.71975</text><text x="451.55" y="215.46" font-size="10.5" letter-spacing="-0.200" fill="#282cac" stroke="#282cac" stroke-width="0.18">0.71333</text><path d="M10.9 231.45l3.900-3.700h-2.100v-3.200h-3.600v3.200h-2.100z" fill="#e8622e" stroke="#c9451c" stroke-width="0.650"/><path d="M10.900 229.35l1.300-1.500h-2.600z" fill="#ffd9c8"/><text x="19.30" y="231.46" font-size="10.5" letter-spacing="-0.270" fill="#1c1c1c" stroke="#1c1c1c" stroke-width="0.18">NZDUSDaustd</text><text x="167.55" y="231.46" font-size="10.5" letter-spacing="-0.200" fill="#d4372e" stroke="#d4372e" stroke-width="0.18">0.68431</text><text x="249.05" y="231.46" font-size="10.5" letter-spacing="-0.200" fill="#d4372e" stroke="#d4372e" stroke-width="0.18">0.68463</text><text x="314.32" y="231.46" font-size="10.5" letter-spacing="-0.200" fill="#d4372e" stroke="#d4372e" stroke-width="0.18">32</text><text x="370.55" y="231.46" font-size="10.5" letter-spacing="-0.200" fill="#d4372e" stroke="#d4372e" stroke-width="0.18">0.69006</text><text x="451.55" y="231.46" font-size="10.5" letter-spacing="-0.200" fill="#d4372e" stroke="#d4372e" stroke-width="0.18">0.68406</text><path d="M10.9 240.25l3.900 3.700h-2.100v3.200h-3.600v-3.200h-2.100z" fill="#33ad3e" stroke="#1d8f2b" stroke-width="0.650"/><path d="M10.900 242.45l1.300 1.500h-2.600z" fill="#d8f5da"/><text x="19.30" y="247.46" font-size="10.5" letter-spacing="-0.270" fill="#1c1c1c" stroke="#1c1c1c" stroke-width="0.18">USDCADaustd</text><text x="167.55" y="247.46" font-size="10.5" letter-spacing="-0.200" fill="#282cac" stroke="#282cac" stroke-width="0.18">1.31466</text><text x="249.05" y="247.46" font-size="10.5" letter-spacing="-0.200" fill="#282cac" stroke="#282cac" stroke-width="0.18">1.31495</text><text x="314.32" y="247.46" font-size="10.5" letter-spacing="-0.200" fill="#282cac" stroke="#282cac" stroke-width="0.18">29</text><text x="370.55" y="247.46" font-size="10.5" letter-spacing="-0.200" fill="#282cac" stroke="#282cac" stroke-width="0.18">1.31751</text><text x="451.55" y="247.46" font-size="10.5" letter-spacing="-0.200" fill="#282cac" stroke="#282cac" stroke-width="0.18">1.31167</text><path d="M10.9 256.25l3.900 3.700h-2.100v3.200h-3.600v-3.200h-2.100z" fill="#33ad3e" stroke="#1d8f2b" stroke-width="0.650"/><path d="M10.900 258.45000000000005l1.300 1.500h-2.600z" fill="#d8f5da"/><text x="19.30" y="263.46" font-size="10.5" letter-spacing="-0.270" fill="#1c1c1c" stroke="#1c1c1c" stroke-width="0.18">USDCHFaustd</text><text x="167.55" y="263.46" font-size="10.5" letter-spacing="-0.200" fill="#282cac" stroke="#282cac" stroke-width="0.18">0.99853</text><text x="249.05" y="263.46" font-size="10.5" letter-spacing="-0.200" fill="#282cac" stroke="#282cac" stroke-width="0.18">0.99882</text><text x="314.32" y="263.46" font-size="10.5" letter-spacing="-0.200" fill="#282cac" stroke="#282cac" stroke-width="0.18">29</text><text x="370.55" y="263.46" font-size="10.5" letter-spacing="-0.200" fill="#282cac" stroke="#282cac" stroke-width="0.18">1.00057</text><text x="451.55" y="263.46" font-size="10.5" letter-spacing="-0.200" fill="#282cac" stroke="#282cac" stroke-width="0.18">0.99609</text><path d="M10.9 279.45000000000005l3.900-3.700h-2.100v-3.200h-3.600v3.200h-2.100z" fill="#e8622e" stroke="#c9451c" stroke-width="0.650"/><path d="M10.900 277.35l1.300-1.500h-2.600z" fill="#ffd9c8"/><text x="19.30" y="279.46" font-size="10.5" letter-spacing="-0.270" fill="#1c1c1c" stroke="#1c1c1c" stroke-width="0.18">EURJPYaustd</text><text x="167.55" y="279.46" font-size="10.5" letter-spacing="-0.200" fill="#d4372e" stroke="#d4372e" stroke-width="0.18">126.177</text><text x="249.05" y="279.46" font-size="10.5" letter-spacing="-0.200" fill="#d4372e" stroke="#d4372e" stroke-width="0.18">126.201</text><text x="314.32" y="279.46" font-size="10.5" letter-spacing="-0.200" fill="#d4372e" stroke="#d4372e" stroke-width="0.18">24</text><text x="370.55" y="279.46" font-size="10.5" letter-spacing="-0.200" fill="#d4372e" stroke="#d4372e" stroke-width="0.18">126.197</text><text x="451.55" y="279.46" font-size="10.5" letter-spacing="-0.200" fill="#d4372e" stroke="#d4372e" stroke-width="0.18">125.521</text><path d="M10.9 288.25l3.900 3.700h-2.100v3.200h-3.600v-3.200h-2.100z" fill="#33ad3e" stroke="#1d8f2b" stroke-width="0.650"/><path d="M10.900 290.45000000000005l1.300 1.500h-2.600z" fill="#d8f5da"/><text x="19.30" y="295.46" font-size="10.5" letter-spacing="-0.270" fill="#1c1c1c" stroke="#1c1c1c" stroke-width="0.18">GBPAUDaustd</text><text x="167.55" y="295.46" font-size="10.5" letter-spacing="-0.200" fill="#282cac" stroke="#282cac" stroke-width="0.18">1.86704</text><text x="249.05" y="295.46" font-size="10.5" letter-spacing="-0.200" fill="#282cac" stroke="#282cac" stroke-width="0.18">1.86749</text><text x="314.32" y="295.46" font-size="10.5" letter-spacing="-0.200" fill="#282cac" stroke="#282cac" stroke-width="0.18">45</text><text x="370.55" y="295.46" font-size="10.5" letter-spacing="-0.200" fill="#282cac" stroke="#282cac" stroke-width="0.18">1.86721</text><text x="451.55" y="295.46" font-size="10.5" letter-spacing="-0.200" fill="#282cac" stroke="#282cac" stroke-width="0.18">1.84072</text><path d="M10.9 304.25l3.900 3.700h-2.100v3.200h-3.600v-3.200h-2.100z" fill="#33ad3e" stroke="#1d8f2b" stroke-width="0.650"/><path d="M10.900 306.45000000000005l1.300 1.500h-2.600z" fill="#d8f5da"/><text x="19.30" y="311.46" font-size="10.5" letter-spacing="-0.270" fill="#1c1c1c" stroke="#1c1c1c" stroke-width="0.18">GBPCHFaustd</text><text x="167.55" y="311.46" font-size="10.5" letter-spacing="-0.200" fill="#282cac" stroke="#282cac" stroke-width="0.18">1.33067</text><text x="249.05" y="311.46" font-size="10.5" letter-spacing="-0.200" fill="#282cac" stroke="#282cac" stroke-width="0.18">1.33116</text><text x="314.32" y="311.46" font-size="10.5" letter-spacing="-0.200" fill="#282cac" stroke="#282cac" stroke-width="0.18">49</text><text x="370.55" y="311.46" font-size="10.5" letter-spacing="-0.200" fill="#282cac" stroke="#282cac" stroke-width="0.18">1.33107</text><text x="451.55" y="311.46" font-size="10.5" letter-spacing="-0.200" fill="#282cac" stroke="#282cac" stroke-width="0.18">1.32299</text><path d="M10.9 320.25l3.900 3.700h-2.100v3.200h-3.600v-3.200h-2.100z" fill="#33ad3e" stroke="#1d8f2b" stroke-width="0.650"/><path d="M10.900 322.45000000000005l1.300 1.500h-2.600z" fill="#d8f5da"/><text x="19.30" y="327.46" font-size="10.5" letter-spacing="-0.270" fill="#1c1c1c" stroke="#1c1c1c" stroke-width="0.18">GBPCADaustd</text><text x="167.55" y="327.46" font-size="10.5" letter-spacing="-0.200" fill="#282cac" stroke="#282cac" stroke-width="0.18">1.75197</text><text x="249.05" y="327.46" font-size="10.5" letter-spacing="-0.200" fill="#282cac" stroke="#282cac" stroke-width="0.18">1.75240</text><text x="314.32" y="327.46" font-size="10.5" letter-spacing="-0.200" fill="#282cac" stroke="#282cac" stroke-width="0.18">43</text><text x="370.55" y="327.46" font-size="10.5" letter-spacing="-0.200" fill="#282cac" stroke="#282cac" stroke-width="0.18">1.75302</text><text x="451.55" y="327.46" font-size="10.5" letter-spacing="-0.200" fill="#282cac" stroke="#282cac" stroke-width="0.18">1.74183</text><path d="M10.9 336.25l3.900 3.700h-2.100v3.200h-3.600v-3.200h-2.100z" fill="#33ad3e" stroke="#1d8f2b" stroke-width="0.650"/><path d="M10.900 338.45000000000005l1.300 1.500h-2.600z" fill="#d8f5da"/><text x="19.30" y="343.46" font-size="10.5" letter-spacing="-0.270" fill="#1c1c1c" stroke="#1c1c1c" stroke-width="0.18">ZARJPYaustd</text><text x="178.82" y="343.46" font-size="10.5" letter-spacing="-0.200" fill="#282cac" stroke="#282cac" stroke-width="0.18">7.954</text><text x="260.32" y="343.46" font-size="10.5" letter-spacing="-0.200" fill="#282cac" stroke="#282cac" stroke-width="0.18">7.979</text><text x="314.32" y="343.46" font-size="10.5" letter-spacing="-0.200" fill="#282cac" stroke="#282cac" stroke-width="0.18">25</text><text x="381.82" y="343.46" font-size="10.5" letter-spacing="-0.200" fill="#282cac" stroke="#282cac" stroke-width="0.18">7.988</text><text x="462.82" y="343.46" font-size="10.5" letter-spacing="-0.200" fill="#282cac" stroke="#282cac" stroke-width="0.18">7.938</text><path d="M10.9 352.25l3.900 3.700h-2.100v3.200h-3.600v-3.200h-2.100z" fill="#33ad3e" stroke="#1d8f2b" stroke-width="0.650"/><path d="M10.900 354.45000000000005l1.300 1.500h-2.600z" fill="#d8f5da"/><text x="19.30" y="359.46" font-size="10.5" letter-spacing="-0.270" fill="#1c1c1c" stroke="#1c1c1c" stroke-width="0.18">XAGUSDaustd</text><text x="173.18" y="359.46" font-size="10.5" letter-spacing="-0.200" fill="#282cac" stroke="#282cac" stroke-width="0.18">15.774</text><text x="254.68" y="359.46" font-size="10.5" letter-spacing="-0.200" fill="#282cac" stroke="#282cac" stroke-width="0.18">15.819</text><text x="314.32" y="359.46" font-size="10.5" letter-spacing="-0.200" fill="#282cac" stroke="#282cac" stroke-width="0.18">45</text><text x="376.18" y="359.46" font-size="10.5" letter-spacing="-0.200" fill="#282cac" stroke="#282cac" stroke-width="0.18">16.097</text><text x="457.18" y="359.46" font-size="10.5" letter-spacing="-0.200" fill="#282cac" stroke="#282cac" stroke-width="0.18">15.730</text></g>
<path d="M496.000 100.800l2.700-2.700 2.700 2.700" stroke="#777" stroke-width="1.000" fill="none"/><path d="M496.000 348.600l2.700 2.700 2.700-2.700" stroke="#777" stroke-width="1.000" fill="none"/>
<g fill="#111"><text x="11.90" y="368.98" font-size="10.2" stroke="#111" stroke-width="0.2">交易品种</text></g>
<g fill="#8a8a8a"><text x="68.60" y="368.82" font-size="9.8" stroke="#8a8a8a" stroke-width="0.2">即时图</text></g>
<g><path d="M1011.300 78V345.500M511 345.500H1011.300" stroke="#9a9a9a" stroke-width="1" fill="none"/><path d="M511 94.300H1011" stroke="#5f6462" stroke-width="1"/><path d="M511 98.400H1011" stroke="#5d6761" stroke-width="0.8" stroke-dasharray="5.500 2.500 1.500 2.500"/><polyline fill="none" stroke="#8c1d24" stroke-width="0.950" stroke-linejoin="round" points="512.0,328.6 522.0,328.2 532.0,327.6 545.0,326.8 556.0,325.8 564.0,323.5 571.0,321.0 579.0,318.8 587.0,316.5 595.0,313.2 600.5,310.5 605.0,305.5 610.5,299.5 617.0,292.5 623.0,285.8 629.0,279.0 635.5,272.0 642.0,265.0 648.0,258.5 652.0,256.0 656.8,254.5 662.0,253.2 668.0,252.2 673.0,251.6 678.0,251.4 682.0,252.2 685.5,253.9 689.0,255.8 693.0,257.0 697.0,257.3 700.5,257.0 704.0,256.6 708.0,255.5 712.0,252.5 716.8,246.5 720.0,240.0 725.0,232.0 730.0,225.0 733.0,221.5 736.0,219.0 741.0,216.8 746.0,215.0 749.0,212.0 752.0,208.0 756.0,203.0 760.0,199.0 764.0,196.8 768.0,195.5 773.0,193.5 777.5,191.2 780.0,189.0 782.5,186.2 785.0,182.0 787.5,178.8 790.0,176.6 792.5,175.6 795.0,175.4 797.5,175.6 802.0,176.8 806.2,178.0 810.0,180.0 815.0,181.3 820.0,182.5 825.0,183.3 830.0,184.0 835.0,184.5 840.0,185.0 844.0,186.0 848.0,187.5 852.0,189.4 855.0,190.5 858.5,190.9 862.0,190.8 866.0,190.0 870.0,188.5 874.0,186.2 878.0,183.0 881.5,179.5 885.0,175.0 888.0,170.5 890.0,167.0 892.5,162.5 895.0,157.0 897.0,153.5 899.0,150.0 901.5,145.0 904.4,139.4"/><path d="M511.50 331.8V335.5M514.77 330.5V334.0M518.04 330.0V332.5M521.31 329.5V332.0M524.58 327.5V332.5M527.85 328.0V335.5M531.12 328.5V335.5M534.39 330.0V335.0M537.66 324.5V336.0M540.93 319.5V336.0M544.20 308.0V329.0M547.47 317.0V334.0M550.74 319.0V335.0M554.01 316.0V324.0M557.28 315.0V324.5M560.55 319.0V326.0M563.82 312.0V325.0M567.09 307.0V321.0M570.36 304.0V317.0M573.63 300.0V316.0M576.90 301.0V316.0M580.17 313.0V323.0M583.44 310.0V317.0M586.71 302.0V321.0M589.98 302.0V326.0M593.25 301.0V315.0M596.52 304.0V314.0M599.79 296.0V309.0M603.06 274.5V302.0M606.33 248.9V282.0M609.60 261.4V275.8M612.87 268.2V275.0M616.14 260.0V275.0M619.41 254.5V265.0M622.68 249.5V265.8M625.95 260.0V266.4M629.22 263.9V268.2M632.49 265.0V269.5M635.76 237.0V254.0M639.03 241.0V256.0M642.30 243.0V251.0M645.57 242.5V250.0M648.84 237.5V247.0M652.11 237.5V249.0M655.38 238.5V250.5M658.65 248.5V257.0M661.92 253.5V268.0M665.19 254.5V264.0M668.46 250.5V258.0M671.73 254.5V259.0M675.00 255.0V259.0M678.27 255.0V264.0M681.54 259.5V264.0M684.81 261.0V272.0M688.08 259.0V270.0M691.35 253.5V266.0M694.62 238.0V262.0M697.89 240.0V258.0M701.16 237.0V253.0M704.43 238.5V251.0M707.70 235.0V250.0M710.97 212.5V249.5M714.24 193.8V222.0M717.51 168.0V200.0M720.78 185.6V216.0M724.05 186.9V208.0M727.32 175.6V205.0M730.59 171.9V218.0M733.86 192.0V220.0M737.13 209.0V243.0M740.40 229.0V242.0M743.67 220.5V237.0M746.94 222.0V252.0M750.21 173.0V230.0M753.48 144.4V183.8M756.75 151.2V166.9M760.02 164.4V180.6M763.29 168.0V176.9M766.56 165.6V176.9M769.83 165.0V176.2M773.10 164.4V183.0M776.37 165.6V183.0M779.64 165.0V178.8M782.91 175.6V184.4M786.18 177.5V183.8M789.45 178.8V185.6M792.72 181.9V190.0M795.99 180.0V188.8M799.26 179.4V185.0M802.53 178.5V183.5M805.80 178.5V183.0M809.07 180.5V191.5M812.34 181.0V188.5M815.61 182.0V189.0M818.88 183.0V190.0M822.15 184.0V191.0M825.42 186.0V191.0M828.69 186.0V191.5M831.96 183.0V189.5M835.23 182.5V189.5M838.50 188.0V192.0M841.77 188.0V193.0M845.04 188.5V204.5M848.31 198.0V212.0M851.58 194.0V207.0M854.85 191.5V204.0M858.12 172.5V203.0M861.39 171.5V183.5M864.66 177.0V195.0M867.93 173.0V184.0M871.20 161.0V181.0M874.47 155.0V168.0M877.74 140.0V164.0M881.01 123.8V143.8M884.28 134.4V146.9M887.55 123.8V140.0M890.82 123.8V137.5M894.09 107.5V129.4M897.36 101.2V120.0M900.63 93.0V111.9M903.90 91.9V105.0" stroke="#2ba431" stroke-width="0.900" fill="none"/><g fill="#051005" stroke="#35b33a" stroke-width="0.750"><rect x="510.35" y="332.8" width="2.300" height="1.7"/><rect x="513.62" y="331.0" width="2.300" height="2.0"/><rect x="516.89" y="330.5" width="2.300" height="1.5"/><rect x="529.97" y="330.0" width="2.300" height="3.5"/><rect x="536.51" y="329.0" width="2.300" height="5.0"/><rect x="539.78" y="322.0" width="2.300" height="11.0"/><rect x="543.05" y="318.0" width="2.300" height="6.5"/><rect x="549.59" y="321.5" width="2.300" height="7.5"/><rect x="552.86" y="317.5" width="2.300" height="5.0"/><rect x="562.67" y="316.0" width="2.300" height="7.5"/><rect x="565.94" y="309.0" width="2.300" height="9.0"/><rect x="572.48" y="307.0" width="2.300" height="7.0"/><rect x="582.29" y="311.0" width="2.300" height="4.0"/><rect x="588.83" y="310.0" width="2.300" height="8.0"/><rect x="595.37" y="308.0" width="2.300" height="4.5"/><rect x="598.64" y="298.0" width="2.300" height="8.5"/><rect x="601.91" y="278.9" width="2.300" height="20.6"/><rect x="605.18" y="250.8" width="2.300" height="27.5"/><rect x="614.99" y="265.0" width="2.300" height="8.2"/><rect x="618.26" y="255.8" width="2.300" height="8.1"/><rect x="634.61" y="243.5" width="2.300" height="3.5"/><rect x="644.42" y="244.0" width="2.300" height="4.0"/><rect x="647.69" y="239.5" width="2.300" height="4.0"/><rect x="664.04" y="255.5" width="2.300" height="3.0"/><rect x="673.85" y="256.0" width="2.300" height="1.5"/><rect x="686.93" y="262.0" width="2.300" height="5.0"/><rect x="690.20" y="258.0" width="2.300" height="6.0"/><rect x="693.47" y="257.0" width="2.300" height="3.0"/><rect x="696.74" y="243.0" width="2.300" height="13.5"/><rect x="706.55" y="245.5" width="2.300" height="4.0"/><rect x="709.82" y="218.0" width="2.300" height="27.0"/><rect x="713.09" y="200.0" width="2.300" height="18.0"/><rect x="716.36" y="185.0" width="2.300" height="13.8"/><rect x="722.90" y="187.5" width="2.300" height="17.5"/><rect x="726.17" y="176.9" width="2.300" height="10.6"/><rect x="739.25" y="234.5" width="2.300" height="2.5"/><rect x="742.52" y="227.0" width="2.300" height="8.0"/><rect x="749.06" y="179.0" width="2.300" height="49.0"/><rect x="752.33" y="165.0" width="2.300" height="13.8"/><rect x="768.68" y="166.9" width="2.300" height="6.8"/><rect x="775.22" y="173.8" width="2.300" height="6.2"/><rect x="785.03" y="180.0" width="2.300" height="3.0"/><rect x="791.57" y="183.0" width="2.300" height="5.0"/><rect x="794.84" y="181.2" width="2.300" height="2.5"/><rect x="798.11" y="179.8" width="2.300" height="2.2"/><rect x="804.65" y="180.0" width="2.300" height="1.5"/><rect x="811.19" y="182.0" width="2.300" height="6.0"/><rect x="814.46" y="184.0" width="2.300" height="3.5"/><rect x="824.27" y="187.5" width="2.300" height="3.0"/><rect x="827.54" y="187.0" width="2.300" height="4.0"/><rect x="830.81" y="184.0" width="2.300" height="4.5"/><rect x="840.62" y="188.5" width="2.300" height="3.0"/><rect x="853.70" y="192.5" width="2.300" height="9.5"/><rect x="856.97" y="173.0" width="2.300" height="27.0"/><rect x="866.78" y="175.0" width="2.300" height="8.5"/><rect x="870.05" y="163.0" width="2.300" height="12.5"/><rect x="873.32" y="157.0" width="2.300" height="7.0"/><rect x="876.59" y="141.9" width="2.300" height="20.1"/><rect x="879.86" y="138.0" width="2.300" height="5.0"/><rect x="883.13" y="135.5" width="2.300" height="2.5"/><rect x="886.40" y="130.0" width="2.300" height="8.8"/><rect x="889.67" y="125.0" width="2.300" height="4.4"/><rect x="892.94" y="119.4" width="2.300" height="6.8"/><rect x="896.21" y="105.6" width="2.300" height="13.8"/><rect x="899.48" y="99.4" width="2.300" height="6.8"/><rect x="902.75" y="94.4" width="2.300" height="4.3"/></g><g fill="#f2fff0" stroke="#7ee07e" stroke-width="0.500"><rect x="520.16" y="330.0" width="2.300" height="1.2"/><rect x="523.43" y="328.5" width="2.300" height="2.5"/><rect x="526.70" y="329.0" width="2.300" height="3.5"/><rect x="533.24" y="331.0" width="2.300" height="2.5"/><rect x="546.32" y="318.5" width="2.300" height="11.0"/><rect x="556.13" y="317.5" width="2.300" height="6.0"/><rect x="559.40" y="323.5" width="2.300" height="1.0"/><rect x="569.21" y="308.5" width="2.300" height="6.5"/><rect x="575.75" y="305.5" width="2.300" height="9.0"/><rect x="579.02" y="315.0" width="2.300" height="2.0"/><rect x="585.56" y="310.5" width="2.300" height="6.5"/><rect x="592.10" y="310.0" width="2.300" height="2.0"/><rect x="608.45" y="265.8" width="2.300" height="5.6"/><rect x="611.72" y="271.8" width="2.300" height="2.1"/><rect x="621.53" y="255.8" width="2.300" height="8.8"/><rect x="624.80" y="263.9" width="2.300" height="1.6"/><rect x="628.07" y="265.5" width="2.300" height="1.2"/><rect x="631.34" y="265.8" width="2.300" height="2.8"/><rect x="637.88" y="243.5" width="2.300" height="1.5"/><rect x="641.15" y="245.5" width="2.300" height="3.0"/><rect x="650.96" y="239.5" width="2.300" height="8.5"/><rect x="654.23" y="247.5" width="2.300" height="2.5"/><rect x="657.50" y="249.5" width="2.300" height="4.0"/><rect x="660.77" y="254.0" width="2.300" height="5.0"/><rect x="667.31" y="255.0" width="2.300" height="1.0"/><rect x="670.58" y="255.5" width="2.300" height="2.5"/><rect x="677.12" y="256.0" width="2.300" height="7.0"/><rect x="680.39" y="262.0" width="2.300" height="1.0"/><rect x="683.66" y="263.0" width="2.300" height="4.0"/><rect x="700.01" y="242.5" width="2.300" height="3.0"/><rect x="703.28" y="245.0" width="2.300" height="5.0"/><rect x="719.63" y="186.9" width="2.300" height="18.1"/><rect x="729.44" y="177.5" width="2.300" height="34.4"/><rect x="732.71" y="210.0" width="2.300" height="2.0"/><rect x="735.98" y="211.5" width="2.300" height="31.0"/><rect x="745.79" y="226.0" width="2.300" height="2.0"/><rect x="755.60" y="165.0" width="2.300" height="1.2"/><rect x="758.87" y="165.6" width="2.300" height="4.4"/><rect x="762.14" y="168.8" width="2.300" height="2.5"/><rect x="765.41" y="170.6" width="2.300" height="4.4"/><rect x="771.95" y="166.9" width="2.300" height="15.0"/><rect x="778.49" y="173.8" width="2.300" height="4.2"/><rect x="781.76" y="177.5" width="2.300" height="5.5"/><rect x="788.30" y="182.5" width="2.300" height="1.9"/><rect x="801.38" y="179.5" width="2.300" height="2.5"/><rect x="807.92" y="181.5" width="2.300" height="3.5"/><rect x="817.73" y="185.0" width="2.300" height="3.0"/><rect x="821.00" y="185.0" width="2.300" height="5.0"/><rect x="834.08" y="183.5" width="2.300" height="5.5"/><rect x="837.35" y="189.0" width="2.300" height="2.5"/><rect x="843.89" y="189.5" width="2.300" height="9.5"/><rect x="847.16" y="198.5" width="2.300" height="4.0"/><rect x="850.43" y="200.0" width="2.300" height="2.5"/><rect x="860.24" y="173.5" width="2.300" height="7.0"/><rect x="863.51" y="179.5" width="2.300" height="3.5"/></g><path d="M906.200 79.200h8.400l-4.200 4.300z" fill="#b9b9b9"/><path d="M513.300 82.600h5l-2.500 3.200z" fill="#f0f0f0"/><text x="521.50" y="87.99" font-size="8.1" letter-spacing="-0.295" fill="#f2f2f2" stroke="#f2f2f2" stroke-width="0.18">GBPJPYaustd,M30  147.656 147.744 147.579 147.721</text><text x="516.30" y="96.89" font-size="8.1" letter-spacing="-0.261" fill="#d8ded8" stroke="#d8ded8" stroke-width="0.18">#24615646 sell 1.00</text><text x="1015.80" y="120.88" font-size="7.8" letter-spacing="-0.199" fill="#e4e4e4" stroke="#e4e4e4" stroke-width="0.18">147.410</text><text x="1015.80" y="147.28" font-size="7.8" letter-spacing="-0.199" fill="#e4e4e4" stroke="#e4e4e4" stroke-width="0.18">147.065</text><text x="1015.80" y="173.68" font-size="7.8" letter-spacing="-0.199" fill="#e4e4e4" stroke="#e4e4e4" stroke-width="0.18">146.715</text><text x="1015.80" y="200.28" font-size="7.8" letter-spacing="-0.199" fill="#e4e4e4" stroke="#e4e4e4" stroke-width="0.18">146.365</text><text x="1015.80" y="226.98" font-size="7.8" letter-spacing="-0.199" fill="#e4e4e4" stroke="#e4e4e4" stroke-width="0.18">146.015</text><text x="1015.80" y="253.68" font-size="7.8" letter-spacing="-0.199" fill="#e4e4e4" stroke="#e4e4e4" stroke-width="0.18">145.665</text><text x="1015.80" y="280.38" font-size="7.8" letter-spacing="-0.199" fill="#e4e4e4" stroke="#e4e4e4" stroke-width="0.18">145.315</text><text x="1015.80" y="306.98" font-size="7.8" letter-spacing="-0.199" fill="#e4e4e4" stroke="#e4e4e4" stroke-width="0.18">144.965</text><text x="1015.80" y="333.68" font-size="7.8" letter-spacing="-0.199" fill="#e4e4e4" stroke="#e4e4e4" stroke-width="0.18">144.615</text><path d="M1016 88.500h27" stroke="#a8a8a8" stroke-width="1.1" stroke-dasharray="3.500 1.300"/><rect x="1012.400" y="89.100" width="32.600" height="9.600" fill="#f6f6f6"/><text x="1015.60" y="96.99" font-size="8.1" letter-spacing="-0.097" fill="#000" stroke="#000" stroke-width="0.18">147.721</text><text x="510.80" y="355.13" font-size="7.65" letter-spacing="-0.020" fill="#ececec" stroke="#ececec" stroke-width="0.18">25 Feb 2019</text><text x="563.70" y="355.13" font-size="7.65" letter-spacing="-0.020" fill="#ececec" stroke="#ececec" stroke-width="0.18">25 Feb 13:00</text><path d="M562.6 345.500v3" stroke="#c8c8c8" stroke-width="0.9"/><text x="616.00" y="355.13" font-size="7.65" letter-spacing="-0.020" fill="#ececec" stroke="#ececec" stroke-width="0.18">25 Feb 21:00</text><path d="M614.9 345.500v3" stroke="#c8c8c8" stroke-width="0.9"/><text x="668.30" y="355.13" font-size="7.65" letter-spacing="-0.020" fill="#ececec" stroke="#ececec" stroke-width="0.18">26 Feb 05:00</text><path d="M667.2 345.500v3" stroke="#c8c8c8" stroke-width="0.9"/><text x="720.60" y="355.13" font-size="7.65" letter-spacing="-0.020" fill="#ececec" stroke="#ececec" stroke-width="0.18">26 Feb 13:00</text><path d="M719.5 345.500v3" stroke="#c8c8c8" stroke-width="0.9"/><text x="772.90" y="355.13" font-size="7.65" letter-spacing="-0.020" fill="#ececec" stroke="#ececec" stroke-width="0.18">26 Feb 21:00</text><path d="M771.8 345.500v3" stroke="#c8c8c8" stroke-width="0.9"/><text x="825.20" y="355.13" font-size="7.65" letter-spacing="-0.020" fill="#ececec" stroke="#ececec" stroke-width="0.18">27 Feb 05:00</text><path d="M824.1 345.500v3" stroke="#c8c8c8" stroke-width="0.9"/><text x="877.50" y="355.13" font-size="7.65" letter-spacing="-0.020" fill="#ececec" stroke="#ececec" stroke-width="0.18">27 Feb 13:00</text><path d="M876.4 345.500v3" stroke="#c8c8c8" stroke-width="0.9"/></g>
<text x="521.00" y="370.65" font-size="10.6" letter-spacing="-0.442" fill="#8c8c8c" stroke="#8c8c8c" stroke-width="0.18">GBPUSDaustd,H1</text>
<text x="620.50" y="370.65" font-size="10.6" letter-spacing="-0.488" fill="#111" stroke="#111" stroke-width="0.18">GBPJPYaustd,M30</text>
<text x="722.50" y="370.65" font-size="10.6" letter-spacing="-0.116" fill="#8c8c8c" stroke="#8c8c8c" stroke-width="0.18">US30austd,M30</text>
<text x="814.00" y="370.65" font-size="10.6" letter-spacing="-0.293" fill="#8c8c8c" stroke="#8c8c8c" stroke-width="0.18">XAUUSDaustd,H1</text>
<text x="914.00" y="370.65" font-size="10.6" letter-spacing="-0.162" fill="#8c8c8c" stroke="#8c8c8c" stroke-width="0.18">US30austd,H4</text>
<text x="997.50" y="370.65" font-size="10.6" letter-spacing="-0.300" fill="#8c8c8c" stroke="#8c8c8c" stroke-width="0.18">GBPI</text>
<path d="M1026.500 364.500v5l-3-2.500z" fill="#9a9a9a"/><path d="M1039 364.300v5.400l3.400-2.700z" fill="#222"/>
<path d="M4.100 381.600l4.400 4.400M8.500 381.600l-4.400 4.400" stroke="#222" stroke-width="1.200" fill="none"/>
<g><g fill="#222"><text x="16.00" y="392.51" font-size="10.3" stroke="#222" stroke-width="0.2">订单</text></g><path d="M39.500 389.500l2-2.500 2 2.500z" fill="#cfcfcf"/><g fill="#222"><text x="234.40" y="392.51" font-size="10.3" stroke="#222" stroke-width="0.2">时间</text></g><g fill="#222"><text x="304.40" y="392.51" font-size="10.3" stroke="#222" stroke-width="0.2">类型</text></g><g fill="#222"><text x="360.40" y="392.51" font-size="10.3" stroke="#222" stroke-width="0.2">手数</text></g><g fill="#222"><text x="409.30" y="392.51" font-size="10.3" stroke="#222" stroke-width="0.2">交易品种</text></g><g fill="#222"><text x="499.40" y="392.51" font-size="10.3" stroke="#222" stroke-width="0.2">价格</text></g><g fill="#222"><text x="569.40" y="392.51" font-size="10.3" stroke="#222" stroke-width="0.2">止损</text></g><g fill="#222"><text x="638.40" y="392.51" font-size="10.3" stroke="#222" stroke-width="0.2">获利</text></g><g fill="#222"><text x="791.90" y="392.51" font-size="10.3" stroke="#222" stroke-width="0.2">时间</text></g><g fill="#222"><text x="861.90" y="392.51" font-size="10.3" stroke="#222" stroke-width="0.2">价格</text></g><g fill="#222"><text x="920.60" y="392.51" font-size="10.3" stroke="#222" stroke-width="0.2">库存费</text></g><g fill="#222"><text x="1009.40" y="392.51" font-size="10.3" stroke="#222" stroke-width="0.2">获利</text></g><path d="M16.500 398.4h5.500l3 3v8.500h-8.500z" fill="#fcfdfd" stroke="#7d9796" stroke-width="0.9"/><path d="M22 398.4v3h3" fill="none" stroke="#7d9796" stroke-width="0.8"/><circle cx="24.300" cy="408.29999999999995" r="3.000" fill="#d93a2c" stroke="rgba(120,20,15,0.55)" stroke-width="0.5"/><circle cx="23.400" cy="407.29999999999995" r="0.950" fill="rgba(255,255,255,0.45)"/><text x="30.30" y="408.01" font-size="10.5" letter-spacing="-0.200" fill="#1a1a1a" stroke="#1a1a1a" stroke-width="0.18">24603584</text><text x="161.66" y="408.01" font-size="10.5" letter-spacing="-0.200" fill="#1a1a1a" stroke="#1a1a1a" stroke-width="0.18">2019.02.27 02:49:11</text><text x="309.34" y="408.01" font-size="10.5" letter-spacing="-0.200" fill="#1a1a1a" stroke="#1a1a1a" stroke-width="0.18">sell</text><text x="360.66" y="408.01" font-size="10.5" letter-spacing="-0.200" fill="#1a1a1a" stroke="#1a1a1a" stroke-width="0.18">1.00</text><text x="403.15" y="408.01" font-size="10.5" letter-spacing="-0.200" fill="#1a1a1a" stroke="#1a1a1a" stroke-width="0.18">us30austd</text><text x="477.21" y="408.01" font-size="10.5" letter-spacing="-0.200" fill="#1a1a1a" stroke="#1a1a1a" stroke-width="0.18">26035.09</text><text x="547.21" y="408.01" font-size="10.5" letter-spacing="-0.200" fill="#1a1a1a" stroke="#1a1a1a" stroke-width="0.18">26135.89</text><text x="638.76" y="408.01" font-size="10.5" letter-spacing="-0.200" fill="#1a1a1a" stroke="#1a1a1a" stroke-width="0.18">0.00</text><text x="719.36" y="408.01" font-size="10.5" letter-spacing="-0.200" fill="#1a1a1a" stroke="#1a1a1a" stroke-width="0.18">2019.02.27 09:38:46</text><text x="839.71" y="408.01" font-size="10.5" letter-spacing="-0.200" fill="#1a1a1a" stroke="#1a1a1a" stroke-width="0.18">25998.90</text><text x="931.36" y="408.01" font-size="10.5" letter-spacing="-0.200" fill="#1a1a1a" stroke="#1a1a1a" stroke-width="0.18">0.00</text><text x="1004.32" y="408.01" font-size="10.5" letter-spacing="-0.200" fill="#1a1a1a" stroke="#1a1a1a" stroke-width="0.18">36.19</text><rect x="16" y="415.09999999999997" width="9.300" height="10.200" rx="1" fill="#e6f4e6" stroke="#7fa88a" stroke-width="0.9"/><path d="M20.650 417.4l2.900 3.000h-1.700v2.800h-2.400v-2.800h-1.700z" fill="#2aa336" stroke="#187a24" stroke-width="0.6"/><path d="M20.650 419.4l0.900 1.100h-1.800z" fill="#e4f7e4"/><text x="30.30" y="424.01" font-size="10.5" letter-spacing="-0.200" fill="#1a1a1a" stroke="#1a1a1a" stroke-width="0.18">24605762</text><text x="161.66" y="424.01" font-size="10.5" letter-spacing="-0.200" fill="#1a1a1a" stroke="#1a1a1a" stroke-width="0.18">2019.02.27 07:40:30</text><text x="288.92" y="424.01" font-size="10.5" letter-spacing="-0.200" fill="#1a1a1a" stroke="#1a1a1a" stroke-width="0.18">balance</text><text x="998.68" y="424.01" font-size="10.5" letter-spacing="-0.200" fill="#1a1a1a" stroke="#1a1a1a" stroke-width="0.18">400.00</text><path d="M16.500 430.4h5.500l3 3v8.500h-8.500z" fill="#fcfdfd" stroke="#7d9796" stroke-width="0.9"/><path d="M22 430.4v3h3" fill="none" stroke="#7d9796" stroke-width="0.8"/><circle cx="24.300" cy="440.29999999999995" r="3.000" fill="#d93a2c" stroke="rgba(120,20,15,0.55)" stroke-width="0.5"/><circle cx="23.400" cy="439.29999999999995" r="0.950" fill="rgba(255,255,255,0.45)"/><text x="30.30" y="440.01" font-size="10.5" letter-spacing="-0.200" fill="#1a1a1a" stroke="#1a1a1a" stroke-width="0.18">24605765</text><text x="161.66" y="440.01" font-size="10.5" letter-spacing="-0.200" fill="#1a1a1a" stroke="#1a1a1a" stroke-width="0.18">2019.02.27 07:40:49</text><text x="309.34" y="440.01" font-size="10.5" letter-spacing="-0.200" fill="#1a1a1a" stroke="#1a1a1a" stroke-width="0.18">sell</text><text x="360.66" y="440.01" font-size="10.5" letter-spacing="-0.200" fill="#1a1a1a" stroke="#1a1a1a" stroke-width="0.18">1.00</text><text x="403.15" y="440.01" font-size="10.5" letter-spacing="-0.200" fill="#1a1a1a" stroke="#1a1a1a" stroke-width="0.18">us30austd</text><text x="477.21" y="440.01" font-size="10.5" letter-spacing="-0.200" fill="#1a1a1a" stroke="#1a1a1a" stroke-width="0.18">26055.09</text><text x="547.21" y="440.01" font-size="10.5" letter-spacing="-0.200" fill="#1a1a1a" stroke="#1a1a1a" stroke-width="0.18">26035.49</text><text x="638.76" y="440.01" font-size="10.5" letter-spacing="-0.200" fill="#1a1a1a" stroke="#1a1a1a" stroke-width="0.18">0.00</text><text x="719.36" y="440.01" font-size="10.5" letter-spacing="-0.200" fill="#1a1a1a" stroke="#1a1a1a" stroke-width="0.18">2019.02.27 12:14:56</text><text x="839.71" y="440.01" font-size="10.5" letter-spacing="-0.200" fill="#1a1a1a" stroke="#1a1a1a" stroke-width="0.18">25963.90</text><text x="931.36" y="440.01" font-size="10.5" letter-spacing="-0.200" fill="#1a1a1a" stroke="#1a1a1a" stroke-width="0.18">0.00</text><text x="1004.32" y="440.01" font-size="10.5" letter-spacing="-0.200" fill="#1a1a1a" stroke="#1a1a1a" stroke-width="0.18">91.19</text><rect x="16" y="447.09999999999997" width="9.300" height="10.200" rx="1" fill="#e6f4e6" stroke="#7fa88a" stroke-width="0.9"/><path d="M20.650 449.4l2.900 3.000h-1.700v2.800h-2.400v-2.800h-1.700z" fill="#2aa336" stroke="#187a24" stroke-width="0.6"/><path d="M20.650 451.4l0.900 1.100h-1.800z" fill="#e4f7e4"/><text x="30.30" y="456.01" font-size="10.5" letter-spacing="-0.200" fill="#1a1a1a" stroke="#1a1a1a" stroke-width="0.18">24605783</text><text x="161.66" y="456.01" font-size="10.5" letter-spacing="-0.200" fill="#1a1a1a" stroke="#1a1a1a" stroke-width="0.18">2019.02.27 07:44:45</text><text x="288.92" y="456.01" font-size="10.5" letter-spacing="-0.200" fill="#1a1a1a" stroke="#1a1a1a" stroke-width="0.18">balance</text><text x="998.68" y="456.01" font-size="10.5" letter-spacing="-0.200" fill="#1a1a1a" stroke="#1a1a1a" stroke-width="0.18">800.00</text><path d="M16.500 462.4h5.500l3 3v8.500h-8.500z" fill="#fcfdfd" stroke="#7d9796" stroke-width="0.9"/><path d="M22 462.4v3h3" fill="none" stroke="#7d9796" stroke-width="0.8"/><circle cx="24.300" cy="472.29999999999995" r="3.000" fill="#d93a2c" stroke="rgba(120,20,15,0.55)" stroke-width="0.5"/><circle cx="23.400" cy="471.29999999999995" r="0.950" fill="rgba(255,255,255,0.45)"/><text x="30.30" y="472.01" font-size="10.5" letter-spacing="-0.200" fill="#1a1a1a" stroke="#1a1a1a" stroke-width="0.18">24605787</text><text x="161.66" y="472.01" font-size="10.5" letter-spacing="-0.200" fill="#1a1a1a" stroke="#1a1a1a" stroke-width="0.18">2019.02.27 07:44:54</text><text x="309.34" y="472.01" font-size="10.5" letter-spacing="-0.200" fill="#1a1a1a" stroke="#1a1a1a" stroke-width="0.18">sell</text><text x="360.66" y="472.01" font-size="10.5" letter-spacing="-0.200" fill="#1a1a1a" stroke="#1a1a1a" stroke-width="0.18">4.00</text><text x="403.15" y="472.01" font-size="10.5" letter-spacing="-0.200" fill="#1a1a1a" stroke="#1a1a1a" stroke-width="0.18">us30austd</text><text x="477.21" y="472.01" font-size="10.5" letter-spacing="-0.200" fill="#1a1a1a" stroke="#1a1a1a" stroke-width="0.18">26052.09</text><text x="547.21" y="472.01" font-size="10.5" letter-spacing="-0.200" fill="#1a1a1a" stroke="#1a1a1a" stroke-width="0.18">26034.09</text><text x="638.76" y="472.01" font-size="10.5" letter-spacing="-0.200" fill="#1a1a1a" stroke="#1a1a1a" stroke-width="0.18">0.00</text><text x="719.36" y="472.01" font-size="10.5" letter-spacing="-0.200" fill="#1a1a1a" stroke="#1a1a1a" stroke-width="0.18">2019.02.27 16:40:01</text><text x="839.71" y="472.01" font-size="10.5" letter-spacing="-0.200" fill="#1a1a1a" stroke="#1a1a1a" stroke-width="0.18">26033.90</text><text x="931.36" y="472.01" font-size="10.5" letter-spacing="-0.200" fill="#1a1a1a" stroke="#1a1a1a" stroke-width="0.18">0.00</text><text x="1004.32" y="472.01" font-size="10.5" letter-spacing="-0.200" fill="#1a1a1a" stroke="#1a1a1a" stroke-width="0.18">72.76</text><path d="M16.500 478.4h5.500l3 3v8.500h-8.500z" fill="#fcfdfd" stroke="#7d9796" stroke-width="0.9"/><path d="M22 478.4v3h3" fill="none" stroke="#7d9796" stroke-width="0.8"/><circle cx="24.300" cy="488.29999999999995" r="3.000" fill="#2f6fd6" stroke="rgba(120,20,15,0.55)" stroke-width="0.5"/><circle cx="23.400" cy="487.29999999999995" r="0.950" fill="rgba(255,255,255,0.45)"/><text x="30.30" y="488.01" font-size="10.5" letter-spacing="-0.200" fill="#1a1a1a" stroke="#1a1a1a" stroke-width="0.18">24607266</text><text x="161.66" y="488.01" font-size="10.5" letter-spacing="-0.200" fill="#1a1a1a" stroke="#1a1a1a" stroke-width="0.18">2019.02.27 09:32:06</text><text x="307.97" y="488.01" font-size="10.5" letter-spacing="-0.200" fill="#1a1a1a" stroke="#1a1a1a" stroke-width="0.18">buy</text><text x="360.66" y="488.01" font-size="10.5" letter-spacing="-0.200" fill="#1a1a1a" stroke="#1a1a1a" stroke-width="0.18">0.50</text><text x="394.21" y="488.01" font-size="10.5" letter-spacing="-0.200" fill="#1a1a1a" stroke="#1a1a1a" stroke-width="0.18">eurusdaustd</text><text x="482.85" y="488.01" font-size="10.5" letter-spacing="-0.200" fill="#1a1a1a" stroke="#1a1a1a" stroke-width="0.18">1.13773</text><text x="552.85" y="488.01" font-size="10.5" letter-spacing="-0.200" fill="#1a1a1a" stroke="#1a1a1a" stroke-width="0.18">1.13500</text><text x="621.85" y="488.01" font-size="10.5" letter-spacing="-0.200" fill="#1a1a1a" stroke="#1a1a1a" stroke-width="0.18">0.00000</text><text x="719.36" y="488.01" font-size="10.5" letter-spacing="-0.200" fill="#1a1a1a" stroke="#1a1a1a" stroke-width="0.18">2019.02.27 11:14:03</text><text x="845.35" y="488.01" font-size="10.5" letter-spacing="-0.200" fill="#1a1a1a" stroke="#1a1a1a" stroke-width="0.18">1.13901</text><text x="931.36" y="488.01" font-size="10.5" letter-spacing="-0.200" fill="#1a1a1a" stroke="#1a1a1a" stroke-width="0.18">0.00</text><text x="1004.32" y="488.01" font-size="10.5" letter-spacing="-0.200" fill="#1a1a1a" stroke="#1a1a1a" stroke-width="0.18">64.00</text><path d="M16.500 494.4h5.500l3 3v8.500h-8.500z" fill="#fcfdfd" stroke="#7d9796" stroke-width="0.9"/><path d="M22 494.4v3h3" fill="none" stroke="#7d9796" stroke-width="0.8"/><circle cx="24.300" cy="504.29999999999995" r="3.000" fill="#d93a2c" stroke="rgba(120,20,15,0.55)" stroke-width="0.5"/><circle cx="23.400" cy="503.29999999999995" r="0.950" fill="rgba(255,255,255,0.45)"/><text x="30.30" y="504.01" font-size="10.5" letter-spacing="-0.200" fill="#1a1a1a" stroke="#1a1a1a" stroke-width="0.18">24607996</text><text x="161.66" y="504.01" font-size="10.5" letter-spacing="-0.200" fill="#1a1a1a" stroke="#1a1a1a" stroke-width="0.18">2019.02.27 10:22:07</text><text x="309.34" y="504.01" font-size="10.5" letter-spacing="-0.200" fill="#1a1a1a" stroke="#1a1a1a" stroke-width="0.18">sell</text><text x="360.66" y="504.01" font-size="10.5" letter-spacing="-0.200" fill="#1a1a1a" stroke="#1a1a1a" stroke-width="0.18">0.10</text><text x="391.87" y="504.01" font-size="10.5" letter-spacing="-0.200" fill="#1a1a1a" stroke="#1a1a1a" stroke-width="0.18">gbpusdaustd</text><text x="482.85" y="504.01" font-size="10.5" letter-spacing="-0.200" fill="#1a1a1a" stroke="#1a1a1a" stroke-width="0.18">1.32708</text><text x="552.85" y="504.01" font-size="10.5" letter-spacing="-0.200" fill="#1a1a1a" stroke="#1a1a1a" stroke-width="0.18">1.33200</text><text x="621.85" y="504.01" font-size="10.5" letter-spacing="-0.200" fill="#1a1a1a" stroke="#1a1a1a" stroke-width="0.18">1.31000</text><text x="719.36" y="504.01" font-size="10.5" letter-spacing="-0.200" fill="#1a1a1a" stroke="#1a1a1a" stroke-width="0.18">2019.02.27 11:13:53</text><text x="845.35" y="504.01" font-size="10.5" letter-spacing="-0.200" fill="#1a1a1a" stroke="#1a1a1a" stroke-width="0.18">1.32668</text><text x="931.36" y="504.01" font-size="10.5" letter-spacing="-0.200" fill="#1a1a1a" stroke="#1a1a1a" stroke-width="0.18">0.00</text><text x="1009.96" y="504.01" font-size="10.5" letter-spacing="-0.200" fill="#1a1a1a" stroke="#1a1a1a" stroke-width="0.18">4.00</text><path d="M16.500 510.4h5.500l3 3v8.500h-8.500z" fill="#fcfdfd" stroke="#7d9796" stroke-width="0.9"/><path d="M22 510.4v3h3" fill="none" stroke="#7d9796" stroke-width="0.8"/><circle cx="24.300" cy="520.3" r="3.000" fill="#d93a2c" stroke="rgba(120,20,15,0.55)" stroke-width="0.5"/><circle cx="23.400" cy="519.3" r="0.950" fill="rgba(255,255,255,0.45)"/><text x="30.30" y="520.01" font-size="10.5" letter-spacing="-0.200" fill="#1a1a1a" stroke="#1a1a1a" stroke-width="0.18">24609367</text><text x="161.66" y="520.01" font-size="10.5" letter-spacing="-0.200" fill="#1a1a1a" stroke="#1a1a1a" stroke-width="0.18">2019.02.27 07:40:49</text><text x="309.34" y="520.01" font-size="10.5" letter-spacing="-0.200" fill="#1a1a1a" stroke="#1a1a1a" stroke-width="0.18">sell</text><text x="360.66" y="520.01" font-size="10.5" letter-spacing="-0.200" fill="#1a1a1a" stroke="#1a1a1a" stroke-width="0.18">1.00</text><text x="403.15" y="520.01" font-size="10.5" letter-spacing="-0.200" fill="#1a1a1a" stroke="#1a1a1a" stroke-width="0.18">us30austd</text><text x="477.21" y="520.01" font-size="10.5" letter-spacing="-0.200" fill="#1a1a1a" stroke="#1a1a1a" stroke-width="0.18">26055.09</text><text x="547.21" y="520.01" font-size="10.5" letter-spacing="-0.200" fill="#1a1a1a" stroke="#1a1a1a" stroke-width="0.18">26035.49</text><text x="638.76" y="520.01" font-size="10.5" letter-spacing="-0.200" fill="#1a1a1a" stroke="#1a1a1a" stroke-width="0.18">0.00</text><text x="719.36" y="520.01" font-size="10.5" letter-spacing="-0.200" fill="#1a1a1a" stroke="#1a1a1a" stroke-width="0.18">2019.02.27 16:40:04</text><text x="839.71" y="520.01" font-size="10.5" letter-spacing="-0.200" fill="#1a1a1a" stroke="#1a1a1a" stroke-width="0.18">26035.90</text><text x="931.36" y="520.01" font-size="10.5" letter-spacing="-0.200" fill="#1a1a1a" stroke="#1a1a1a" stroke-width="0.18">0.00</text><text x="1004.32" y="520.01" font-size="10.5" letter-spacing="-0.200" fill="#1a1a1a" stroke="#1a1a1a" stroke-width="0.18">19.19</text><path d="M16.500 526.4000000000001h5.500l3 3v8.500h-8.500z" fill="#fcfdfd" stroke="#7d9796" stroke-width="0.9"/><path d="M22 526.4000000000001v3h3" fill="none" stroke="#7d9796" stroke-width="0.8"/><circle cx="24.300" cy="536.3000000000001" r="3.000" fill="#d93a2c" stroke="rgba(120,20,15,0.55)" stroke-width="0.5"/><circle cx="23.400" cy="535.3000000000001" r="0.950" fill="rgba(255,255,255,0.45)"/><text x="30.30" y="536.01" font-size="10.5" letter-spacing="-0.200" fill="#1a1a1a" stroke="#1a1a1a" stroke-width="0.18">24611220</text><text x="161.66" y="536.01" font-size="10.5" letter-spacing="-0.200" fill="#1a1a1a" stroke="#1a1a1a" stroke-width="0.18">2019.02.27 13:54:24</text><text x="309.34" y="536.01" font-size="10.5" letter-spacing="-0.200" fill="#1a1a1a" stroke="#1a1a1a" stroke-width="0.18">sell</text><text x="360.66" y="536.01" font-size="10.5" letter-spacing="-0.200" fill="#1a1a1a" stroke="#1a1a1a" stroke-width="0.18">0.50</text><text x="391.87" y="536.01" font-size="10.5" letter-spacing="-0.200" fill="#1a1a1a" stroke="#1a1a1a" stroke-width="0.18">gbpusdaustd</text><text x="482.85" y="536.01" font-size="10.5" letter-spacing="-0.200" fill="#1a1a1a" stroke="#1a1a1a" stroke-width="0.18">1.33182</text><text x="552.85" y="536.01" font-size="10.5" letter-spacing="-0.200" fill="#1a1a1a" stroke="#1a1a1a" stroke-width="0.18">1.33590</text><text x="621.85" y="536.01" font-size="10.5" letter-spacing="-0.200" fill="#1a1a1a" stroke="#1a1a1a" stroke-width="0.18">1.31000</text><text x="719.36" y="536.01" font-size="10.5" letter-spacing="-0.200" fill="#1a1a1a" stroke="#1a1a1a" stroke-width="0.18">2019.02.27 14:05:50</text><text x="845.35" y="536.01" font-size="10.5" letter-spacing="-0.200" fill="#1a1a1a" stroke="#1a1a1a" stroke-width="0.18">1.33149</text><text x="931.36" y="536.01" font-size="10.5" letter-spacing="-0.200" fill="#1a1a1a" stroke="#1a1a1a" stroke-width="0.18">0.00</text><text x="1004.32" y="536.01" font-size="10.5" letter-spacing="-0.200" fill="#1a1a1a" stroke="#1a1a1a" stroke-width="0.18">16.50</text><path d="M16.500 542.4000000000001h5.500l3 3v8.500h-8.500z" fill="#fcfdfd" stroke="#7d9796" stroke-width="0.9"/><path d="M22 542.4000000000001v3h3" fill="none" stroke="#7d9796" stroke-width="0.8"/><circle cx="24.300" cy="552.3000000000001" r="3.000" fill="#d93a2c" stroke="rgba(120,20,15,0.55)" stroke-width="0.5"/><circle cx="23.400" cy="551.3000000000001" r="0.950" fill="rgba(255,255,255,0.45)"/><text x="30.30" y="552.01" font-size="10.5" letter-spacing="-0.200" fill="#1a1a1a" stroke="#1a1a1a" stroke-width="0.18">24614150</text><text x="161.66" y="552.01" font-size="10.5" letter-spacing="-0.200" fill="#1a1a1a" stroke="#1a1a1a" stroke-width="0.18">2019.02.27 16:04:08</text><text x="309.34" y="552.01" font-size="10.5" letter-spacing="-0.200" fill="#1a1a1a" stroke="#1a1a1a" stroke-width="0.18">sell</text><text x="360.66" y="552.01" font-size="10.5" letter-spacing="-0.200" fill="#1a1a1a" stroke="#1a1a1a" stroke-width="0.18">0.50</text><text x="395.37" y="552.01" font-size="10.5" letter-spacing="-0.200" fill="#1a1a1a" stroke="#1a1a1a" stroke-width="0.18">gbpjpyaustd</text><text x="482.85" y="552.01" font-size="10.5" letter-spacing="-0.200" fill="#1a1a1a" stroke="#1a1a1a" stroke-width="0.18">147.489</text><text x="552.85" y="552.01" font-size="10.5" letter-spacing="-0.200" fill="#1a1a1a" stroke="#1a1a1a" stroke-width="0.18">147.842</text><text x="621.85" y="552.01" font-size="10.5" letter-spacing="-0.200" fill="#1a1a1a" stroke="#1a1a1a" stroke-width="0.18">146.752</text><text x="719.36" y="552.01" font-size="10.5" letter-spacing="-0.200" fill="#1a1a1a" stroke="#1a1a1a" stroke-width="0.18">2019.02.27 16:59:59</text><text x="845.35" y="552.01" font-size="10.5" letter-spacing="-0.200" fill="#1a1a1a" stroke="#1a1a1a" stroke-width="0.18">147.887</text><text x="931.36" y="552.01" font-size="10.5" letter-spacing="-0.200" fill="#1a1a1a" stroke="#1a1a1a" stroke-width="0.18">0.00</text><text x="995.39" y="552.01" font-size="10.5" letter-spacing="-0.200" fill="#1a1a1a" stroke="#1a1a1a" stroke-width="0.18">-215.63</text><path d="M16.500 558.4000000000001h5.500l3 3v8.500h-8.500z" fill="#fcfdfd" stroke="#7d9796" stroke-width="0.9"/><path d="M22 558.4000000000001v3h3" fill="none" stroke="#7d9796" stroke-width="0.8"/><circle cx="24.300" cy="568.3000000000001" r="3.000" fill="#e2572b" stroke="rgba(120,20,15,0.55)" stroke-width="0.5"/><circle cx="23.400" cy="567.3000000000001" r="0.950" fill="rgba(255,255,255,0.45)"/><text x="30.30" y="568.01" font-size="10.5" letter-spacing="-0.200" fill="#ffffff" stroke="#ffffff" stroke-width="0.18">24614489</text><text x="161.66" y="568.01" font-size="10.5" letter-spacing="-0.200" fill="#ffffff" stroke="#ffffff" stroke-width="0.18">2019.02.27 16:18:36</text><text x="309.34" y="568.01" font-size="10.5" letter-spacing="-0.200" fill="#ffffff" stroke="#ffffff" stroke-width="0.18">sell</text><text x="360.66" y="568.01" font-size="10.5" letter-spacing="-0.200" fill="#ffffff" stroke="#ffffff" stroke-width="0.18">0.50</text><text x="395.37" y="568.01" font-size="10.5" letter-spacing="-0.200" fill="#ffffff" stroke="#ffffff" stroke-width="0.18">gbpjpyaustd</text><text x="482.85" y="568.01" font-size="10.5" letter-spacing="-0.200" fill="#ffffff" stroke="#ffffff" stroke-width="0.18">147.516</text><text x="552.85" y="568.01" font-size="10.5" letter-spacing="-0.200" fill="#1a1a1a" stroke="#1a1a1a" stroke-width="0.18">147.840</text><text x="633.12" y="568.01" font-size="10.5" letter-spacing="-0.200" fill="#ffffff" stroke="#ffffff" stroke-width="0.18">0.000</text><text x="719.36" y="568.01" font-size="10.5" letter-spacing="-0.200" fill="#ffffff" stroke="#ffffff" stroke-width="0.18">2019.02.27 16:59:59</text><text x="845.35" y="568.01" font-size="10.5" letter-spacing="-0.200" fill="#ffffff" stroke="#ffffff" stroke-width="0.18">147.887</text><text x="931.36" y="568.01" font-size="10.5" letter-spacing="-0.200" fill="#ffffff" stroke="#ffffff" stroke-width="0.18">0.00</text><text x="995.39" y="568.01" font-size="10.5" letter-spacing="-0.200" fill="#ffffff" stroke="#ffffff" stroke-width="0.18">-167.36</text></g>
<circle cx="21.600" cy="580.800" r="2.700" fill="#d2d2d2" stroke="#9a9a9a" stroke-width="0.9"/>
<g fill="#111"><text x="30.00" y="584.87" font-size="10.45" font-weight="bold" stroke="#111" stroke-width="0.2">盈</text><text x="40.45" y="584.60" font-size="10.75" letter-spacing="-0.1" stroke="#111" stroke-width="0.15" font-weight="bold">/</text><text x="43.34" y="584.87" font-size="10.45" font-weight="bold" stroke="#111" stroke-width="0.2">亏</text><text x="53.79" y="584.60" font-size="10.75" letter-spacing="-0.1" stroke="#111" stroke-width="0.15" font-weight="bold">: -1 704.96  </text><text x="110.45" y="584.87" font-size="10.45" font-weight="bold" stroke="#111" stroke-width="0.2">信用额</text><text x="141.80" y="584.60" font-size="10.75" letter-spacing="-0.1" stroke="#111" stroke-width="0.15" font-weight="bold">: 0.00  </text><text x="174.46" y="584.87" font-size="10.45" font-weight="bold" stroke="#111" stroke-width="0.2">存款</text><text x="195.36" y="584.60" font-size="10.75" letter-spacing="-0.1" stroke="#111" stroke-width="0.15" font-weight="bold">: 6 802.49  </text><text x="248.55" y="584.87" font-size="10.45" font-weight="bold" stroke="#111" stroke-width="0.2">取款</text><text x="269.45" y="584.60" font-size="10.75" letter-spacing="-0.1" stroke="#111" stroke-width="0.15" font-weight="bold">: -2 062.55</text></g>
<text x="989.44" y="584.55" font-size="10.6" letter-spacing="-0.100" fill="#111" stroke="#111" stroke-width="0.18" font-weight="bold">3 034.98</text>
<path d="M1038.000 389.600l2.900-2.900 2.900 2.900" stroke="#8c8c8c" stroke-width="1.000" fill="none"/><path d="M1038.600 579.800l2.900 2.900 2.900-2.900" stroke="#777" stroke-width="1.000" fill="none"/>
<g><g fill="#4c4c4c"><text x="21.10" y="601.95" font-size="10.4" stroke="#4c4c4c" stroke-width="0.2">交易</text></g><g fill="#4c4c4c"><text x="58.60" y="601.95" font-size="10.4" stroke="#4c4c4c" stroke-width="0.2">展示</text></g><g fill="#111"><text x="92.90" y="602.10" font-size="10.8" font-weight="500" stroke="#111" stroke-width="0.2">账户历史</text></g><g fill="#4c4c4c"><text x="149.90" y="601.95" font-size="10.4" stroke="#4c4c4c" stroke-width="0.2">新闻</text></g><g fill="#4c4c4c"><text x="186.50" y="601.95" font-size="10.4" stroke="#4c4c4c" stroke-width="0.2">警报</text></g><g fill="#4c4c4c"><text x="222.40" y="601.95" font-size="10.4" stroke="#4c4c4c" stroke-width="0.2">邮箱</text></g><g fill="#4c4c4c"><text x="270.50" y="601.95" font-size="10.4" stroke="#4c4c4c" stroke-width="0.2">市场</text></g><g fill="#4c4c4c"><text x="307.10" y="601.95" font-size="10.4" stroke="#4c4c4c" stroke-width="0.2">文章</text></g><g fill="#4c4c4c"><text x="343.20" y="601.95" font-size="10.4" stroke="#4c4c4c" stroke-width="0.2">代码库</text></g><g fill="#4c4c4c"><text x="417.60" y="601.95" font-size="10.4" stroke="#4c4c4c" stroke-width="0.2">日志</text></g><text x="388.01" y="601.51" font-size="10.2" letter-spacing="-0.220" fill="#4c4c4c" stroke="#4c4c4c" stroke-width="0.18">EA</text><text x="244.17" y="601.93" font-size="9.4" letter-spacing="0.000" fill="#e0261c" stroke="#e0261c" stroke-width="0.18" font-weight="bold">10</text></g>
<g transform="translate(10.600 600) rotate(-90)"><g transform="translate(0.5 -4)"><g fill="#3f5f94"><text x="0.00" y="3.61" font-size="9.5" stroke="#3f5f94" stroke-width="0.19">终端</text></g></g></g>
<g fill="#3a3a3a"><text x="879.50" y="596.00" font-size="10" stroke="#3a3a3a" stroke-width="0.2">个性设置，点我看看</text></g>
<g fill="none" stroke="#d8323f" stroke-width="2.550" stroke-linecap="round"><ellipse cx="60" cy="83" rx="56.500" ry="23" transform="rotate(-1.500 60 83)"/><ellipse cx="383.700" cy="153.700" rx="48" ry="78.400"/><ellipse cx="908.300" cy="101.800" rx="49.800" ry="44.200"/><ellipse cx="563.700" cy="561.800" rx="59.500" ry="29.800" transform="rotate(2 563.700 561.800)"/></g>
</svg>
</div>
</body>
</html>
